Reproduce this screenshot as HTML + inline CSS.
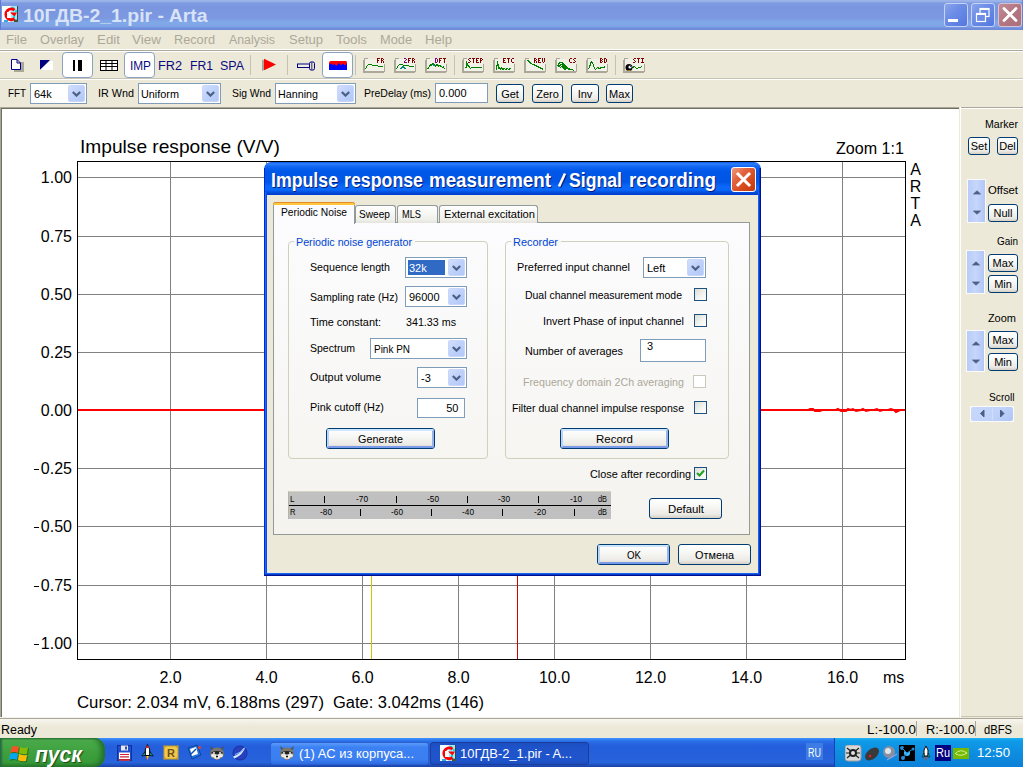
<!DOCTYPE html><html><head><meta charset="utf-8"><style>
html,body{margin:0;padding:0;width:1023px;height:767px;overflow:hidden;background:#ECE9D8;position:relative;}
.a{position:absolute;box-sizing:border-box;}
</style></head><body>
<div class="a" style="left:0px;top:0px;width:1023px;height:30px;background:linear-gradient(#9AAFE8 0px,#9EB9EA 1px,#7E9AE0 3px,#7A96DF 8px,#7B98E0 18px,#80A8E8 22px,#80A6E8 26px,#7490DD 28px,#6F8AD8 29px);"></div>
<div class="a" style="left:0px;top:0px;width:1px;height:30px;background:#5F7BD5;"></div>
<svg class="a" style="left:2px;top:6px" width="16" height="16" viewBox="0 0 16 16"><rect x="0" y="0" width="16" height="16" fill="#F4FCFF"/><rect x="9" y="0" width="7" height="16" fill="#9FE8F4"/><rect x="10" y="1" width="2" height="2" fill="#10E0F0"/><rect x="13" y="4" width="2" height="2" fill="#10E0F0"/><rect x="11" y="10" width="2" height="2" fill="#10E0F0"/><rect x="13" y="13" width="2" height="1" fill="#10E0F0"/><rect x="2" y="14" width="4" height="2" fill="#30A8E0"/><rect x="15" y="0" width="1" height="16" fill="#404040"/><rect x="12" y="14" width="4" height="2" fill="#505030"/><path d="M12.5 4.2 A5.3 5.3 0 1 0 12.5 12.5" stroke="#FF0000" stroke-width="3" fill="none"/><path d="M8 6.5 L15 6.5 L12.5 10.5 Z" fill="#FF0000"/><rect x="5" y="6" width="3" height="6" fill="#FFFFFF"/></svg>
<span class="a" style="left:23.00px;top:7.06px;white-space:pre;font-family:'Liberation Sans',sans-serif;font-size:18px;font-weight:bold;font-style:normal;color:#D9E3F7;line-height:18px;letter-spacing:0px;transform:scaleX(1.0791);transform-origin:0 0;">10ГДВ-2_1.pir - Arta</span>
<div class="a" style="left:944px;top:3px;width:24px;height:24px;border:1px solid #C6D3F6;border-radius:3px;background:linear-gradient(135deg,#89A6EC 0%,#6D8DE6 40%,#5378E0 100%);"></div>
<div class="a" style="left:971px;top:3px;width:24px;height:24px;border:1px solid #C6D3F6;border-radius:3px;background:linear-gradient(135deg,#89A6EC 0%,#6D8DE6 40%,#5378E0 100%);"></div>
<div class="a" style="left:948px;top:19px;width:10px;height:3px;background:#fff;"></div>
<svg class="a" style="left:975px;top:7px" width="16" height="16" viewBox="0 0 16 16"><rect x="5" y="1.5" width="9" height="8" stroke="#fff" stroke-width="1.2" fill="none"/><rect x="5" y="1" width="9" height="2" fill="#fff"/><rect x="1.5" y="6.5" width="9" height="8" stroke="#fff" stroke-width="1.2" fill="#6D8DE6"/><rect x="1" y="6" width="10" height="2" fill="#fff"/></svg>
<div class="a" style="left:998px;top:3px;width:24px;height:24px;border:1px solid #D7C3D4;border-radius:3px;background:linear-gradient(135deg,#C28C98 0%,#B37682 50%,#A8707C 100%);"></div>
<svg class="a" style="left:1002px;top:7px" width="16" height="16" viewBox="0 0 16 16"><path d="M2 1.5 L14 13.5 M14 1.5 L2 13.5" stroke="#fff" stroke-width="2.8" stroke-linecap="round"/></svg>
<div class="a" style="left:1022px;top:0px;width:1px;height:30px;background:#6A80D8;"></div>
<div class="a" style="left:0px;top:30px;width:1023px;height:19px;background:#ECE9D8;"></div>
<span class="a" style="left:6.00px;top:33.84px;white-space:pre;font-family:'Liberation Sans',sans-serif;font-size:12px;font-weight:normal;font-style:normal;color:#ACA899;line-height:12px;letter-spacing:0px;transform:scaleX(1.0856);transform-origin:0 0;">File</span>
<span class="a" style="left:40.00px;top:33.84px;white-space:pre;font-family:'Liberation Sans',sans-serif;font-size:12px;font-weight:normal;font-style:normal;color:#ACA899;line-height:12px;letter-spacing:0px;transform:scaleX(1.0642);transform-origin:0 0;">Overlay</span>
<span class="a" style="left:97.00px;top:33.84px;white-space:pre;font-family:'Liberation Sans',sans-serif;font-size:12px;font-weight:normal;font-style:normal;color:#ACA899;line-height:12px;letter-spacing:0px;transform:scaleX(1.1118);transform-origin:0 0;">Edit</span>
<span class="a" style="left:132.00px;top:33.84px;white-space:pre;font-family:'Liberation Sans',sans-serif;font-size:12px;font-weight:normal;font-style:normal;color:#ACA899;line-height:12px;letter-spacing:0px;transform:scaleX(1.1242);transform-origin:0 0;">View</span>
<span class="a" style="left:174.00px;top:33.84px;white-space:pre;font-family:'Liberation Sans',sans-serif;font-size:12px;font-weight:normal;font-style:normal;color:#ACA899;line-height:12px;letter-spacing:0px;transform:scaleX(1.0598);transform-origin:0 0;">Record</span>
<span class="a" style="left:229.00px;top:33.84px;white-space:pre;font-family:'Liberation Sans',sans-serif;font-size:12px;font-weight:normal;font-style:normal;color:#ACA899;line-height:12px;letter-spacing:0px;transform:scaleX(1.0294);transform-origin:0 0;">Analysis</span>
<span class="a" style="left:289.00px;top:33.84px;white-space:pre;font-family:'Liberation Sans',sans-serif;font-size:12px;font-weight:normal;font-style:normal;color:#ACA899;line-height:12px;letter-spacing:0px;transform:scaleX(1.0842);transform-origin:0 0;">Setup</span>
<span class="a" style="left:336.00px;top:33.84px;white-space:pre;font-family:'Liberation Sans',sans-serif;font-size:12px;font-weight:normal;font-style:normal;color:#ACA899;line-height:12px;letter-spacing:0px;transform:scaleX(1.1065);transform-origin:0 0;">Tools</span>
<span class="a" style="left:380.00px;top:33.84px;white-space:pre;font-family:'Liberation Sans',sans-serif;font-size:12px;font-weight:normal;font-style:normal;color:#ACA899;line-height:12px;letter-spacing:0px;transform:scaleX(1.0656);transform-origin:0 0;">Mode</span>
<span class="a" style="left:425.00px;top:33.84px;white-space:pre;font-family:'Liberation Sans',sans-serif;font-size:12px;font-weight:normal;font-style:normal;color:#ACA899;line-height:12px;letter-spacing:0px;transform:scaleX(1.0937);transform-origin:0 0;">Help</span>
<div class="a" style="left:0px;top:49px;width:1023px;height:1px;background:#fff;"></div>
<div class="a" style="left:0px;top:50px;width:1023px;height:1px;background:#ACA899;"></div>
<div class="a" style="left:0px;top:51px;width:1023px;height:1px;background:#fff;"></div>
<svg class="a" style="left:10px;top:58px" width="16" height="16" viewBox="0 0 16 16"><rect x="4" y="4" width="10" height="10" fill="#ACA899"/><path d="M1.5 1.5 H7 L10.5 5 V11.5 H1.5 Z" fill="#fff" stroke="#000080" stroke-width="1"/><path d="M7 1.5 V5 H10.5" fill="none" stroke="#000080"/></svg>
<svg class="a" style="left:40px;top:60px" width="14" height="10" viewBox="0 0 14 10"><path d="M0 10 L0 0 L10 0 Z" fill="#000080"/><path d="M0 10 L13 10 L13 1 L10 1 Z" fill="#fff"/></svg>
<div class="a" style="left:62px;top:52px;width:31px;height:26px;border:1px solid #8BA2C1;border-radius:4px;background:#FFFFFF;"></div>
<div class="a" style="left:73px;top:60px;width:2px;height:11px;background:#000;"></div>
<div class="a" style="left:78px;top:60px;width:4px;height:11px;background:#000;"></div>
<svg class="a" style="left:100px;top:60px" width="18" height="11" viewBox="0 0 18 11"><rect x="0.5" y="0.5" width="17" height="10" fill="#fff" stroke="#000"/><path d="M0 3.5 H18 M0 6.5 H18 M6 0 V11 M12 0 V11" stroke="#000"/></svg>
<div class="a" style="left:124px;top:52px;width:31px;height:26px;border:1px solid #8BA2C1;border-radius:4px;background:#FFFFFF;"></div>
<span class="a" style="left:130.00px;top:59.84px;white-space:pre;font-family:'Liberation Sans',sans-serif;font-size:12px;font-weight:normal;font-style:normal;color:#0A0A80;line-height:12px;letter-spacing:0px;transform:scaleX(0.9839);transform-origin:0 0;">IMP</span>
<span class="a" style="left:158.00px;top:59.84px;white-space:pre;font-family:'Liberation Sans',sans-serif;font-size:12px;font-weight:normal;font-style:normal;color:#0A0A80;line-height:12px;letter-spacing:0px;transform:scaleX(1.0586);transform-origin:0 0;">FR2</span>
<span class="a" style="left:190.00px;top:59.84px;white-space:pre;font-family:'Liberation Sans',sans-serif;font-size:12px;font-weight:normal;font-style:normal;color:#0A0A80;line-height:12px;letter-spacing:0px;transform:scaleX(1.0145);transform-origin:0 0;">FR1</span>
<span class="a" style="left:220.00px;top:59.84px;white-space:pre;font-family:'Liberation Sans',sans-serif;font-size:12px;font-weight:normal;font-style:normal;color:#0A0A80;line-height:12px;letter-spacing:0px;transform:scaleX(1.0378);transform-origin:0 0;">SPA</span>
<div class="a" style="left:250px;top:55px;width:1px;height:20px;background:#C5C2B2;"></div>
<svg class="a" style="left:261px;top:58px" width="17" height="14" viewBox="0 0 17 14"><path d="M1 1.5 L13 7.5 L1 13 Z" fill="#A8A595"/><path d="M3 0.8 L15 6.5 L3 12.2 Z" fill="#FF0000"/></svg>
<div class="a" style="left:287px;top:55px;width:1px;height:20px;background:#C5C2B2;"></div>
<svg class="a" style="left:296px;top:61px" width="20" height="10" viewBox="0 0 20 10"><rect x="1.5" y="3" width="12" height="3.5" fill="#F0EEE0" stroke="#000080" stroke-width="1"/><rect x="13.5" y="1" width="5" height="8" rx="1.5" fill="#E8E4D0" stroke="#000080" stroke-width="1"/><path d="M15.8 1.5 V8.5" stroke="#000080" stroke-width="0.8"/></svg>
<div class="a" style="left:322px;top:52px;width:31px;height:26px;border:1px solid #8BA2C1;border-radius:4px;background:#FFFFFF;"></div>
<svg class="a" style="left:329px;top:61px" width="19" height="10" viewBox="0 0 19 10"><path d="M0 2 Q0 0 2 0 H17 Q18 0 18 2 V9 H0 Z" fill="#FF0000"/><path d="M0 9 V3.5 L2 2.5 L4 4 L5.5 3 L7.5 5 L10 2 L12 4.5 L14 2.5 L16 4.5 L18 2.5 V9 Z" fill="#0000FF"/></svg>
<div class="a" style="left:355px;top:55px;width:1px;height:20px;background:#C5C2B2;"></div>
<svg class="a" style="left:363px;top:58px" width="23" height="16" viewBox="0 0 23 16" shape-rendering="crispEdges"><rect x="2" y="1" width="19" height="12" fill="#F2F1E8"/><rect x="0" y="2" width="1" height="13" fill="#ACA899"/><rect x="1" y="0" width="1" height="14" fill="#ACA899"/><rect x="1" y="0" width="4" height="1" fill="#ACA899"/><rect x="0" y="14" width="21" height="1" fill="#ACA899"/><rect x="1" y="13" width="21" height="1" fill="#ACA899"/><rect x="21" y="6" width="1" height="8" fill="#ACA899"/><rect x="13" y="-1" width="5" height="7" fill="#ECE9D8" opacity="0.0"/><rect x="14" y="0" width="1" height="1" fill="#800000"/><rect x="15" y="0" width="1" height="1" fill="#800000"/><rect x="16" y="0" width="1" height="1" fill="#800000"/><rect x="14" y="1" width="1" height="1" fill="#800000"/><rect x="14" y="2" width="1" height="1" fill="#800000"/><rect x="15" y="2" width="1" height="1" fill="#800000"/><rect x="14" y="3" width="1" height="1" fill="#800000"/><rect x="14" y="4" width="1" height="1" fill="#800000"/><rect x="17" y="-1" width="5" height="7" fill="#ECE9D8" opacity="0.0"/><rect x="18" y="0" width="1" height="1" fill="#800000"/><rect x="19" y="0" width="1" height="1" fill="#800000"/><rect x="18" y="1" width="1" height="1" fill="#800000"/><rect x="20" y="1" width="1" height="1" fill="#800000"/><rect x="18" y="2" width="1" height="1" fill="#800000"/><rect x="19" y="2" width="1" height="1" fill="#800000"/><rect x="18" y="3" width="1" height="1" fill="#800000"/><rect x="20" y="3" width="1" height="1" fill="#800000"/><rect x="18" y="4" width="1" height="1" fill="#800000"/><rect x="20" y="4" width="1" height="1" fill="#800000"/><polyline points="2.5,11.5 3.5,8.5 5.5,6.5 8.5,6.5 9.5,7.5 14.5,7.5 15.5,8.5 19.5,8.5 20.5,9.5" stroke="#008000" stroke-width="1.2" fill="none" stroke-linejoin="round"/></svg>
<svg class="a" style="left:394px;top:58px" width="23" height="16" viewBox="0 0 23 16" shape-rendering="crispEdges"><rect x="2" y="1" width="19" height="12" fill="#F2F1E8"/><rect x="0" y="2" width="1" height="13" fill="#ACA899"/><rect x="1" y="0" width="1" height="14" fill="#ACA899"/><rect x="1" y="0" width="4" height="1" fill="#ACA899"/><rect x="0" y="14" width="21" height="1" fill="#ACA899"/><rect x="1" y="13" width="21" height="1" fill="#ACA899"/><rect x="21" y="6" width="1" height="8" fill="#ACA899"/><rect x="9" y="-1" width="5" height="7" fill="#ECE9D8" opacity="0.0"/><rect x="10" y="0" width="1" height="1" fill="#800080"/><rect x="11" y="0" width="1" height="1" fill="#800080"/><rect x="12" y="1" width="1" height="1" fill="#800080"/><rect x="11" y="2" width="1" height="1" fill="#800080"/><rect x="10" y="3" width="1" height="1" fill="#800080"/><rect x="10" y="4" width="1" height="1" fill="#800080"/><rect x="11" y="4" width="1" height="1" fill="#800080"/><rect x="12" y="4" width="1" height="1" fill="#800080"/><rect x="13" y="-1" width="5" height="7" fill="#ECE9D8" opacity="0.0"/><rect x="14" y="0" width="1" height="1" fill="#800000"/><rect x="15" y="0" width="1" height="1" fill="#800000"/><rect x="16" y="0" width="1" height="1" fill="#800000"/><rect x="14" y="1" width="1" height="1" fill="#800000"/><rect x="14" y="2" width="1" height="1" fill="#800000"/><rect x="15" y="2" width="1" height="1" fill="#800000"/><rect x="14" y="3" width="1" height="1" fill="#800000"/><rect x="14" y="4" width="1" height="1" fill="#800000"/><rect x="17" y="-1" width="5" height="7" fill="#ECE9D8" opacity="0.0"/><rect x="18" y="0" width="1" height="1" fill="#800000"/><rect x="19" y="0" width="1" height="1" fill="#800000"/><rect x="18" y="1" width="1" height="1" fill="#800000"/><rect x="20" y="1" width="1" height="1" fill="#800000"/><rect x="18" y="2" width="1" height="1" fill="#800000"/><rect x="19" y="2" width="1" height="1" fill="#800000"/><rect x="18" y="3" width="1" height="1" fill="#800000"/><rect x="20" y="3" width="1" height="1" fill="#800000"/><rect x="18" y="4" width="1" height="1" fill="#800000"/><rect x="20" y="4" width="1" height="1" fill="#800000"/><polyline points="2.5,11.5 3.5,8.5 5.5,6.5 8.5,6.5 9.5,7.5 14.5,7.5 15.5,8.5 19.5,8.5 20.5,9.5" stroke="#008000" stroke-width="1.2" fill="none" stroke-linejoin="round"/><polyline points="6.5,11.5 8.5,8.5 9.5,8.5 11.5,11.5" stroke="#008080" stroke-width="1.2" fill="none" stroke-linejoin="round"/></svg>
<svg class="a" style="left:425px;top:58px" width="23" height="16" viewBox="0 0 23 16" shape-rendering="crispEdges"><rect x="2" y="1" width="19" height="12" fill="#F2F1E8"/><rect x="0" y="2" width="1" height="13" fill="#ACA899"/><rect x="1" y="0" width="1" height="14" fill="#ACA899"/><rect x="1" y="0" width="4" height="1" fill="#ACA899"/><rect x="0" y="14" width="21" height="1" fill="#ACA899"/><rect x="1" y="13" width="21" height="1" fill="#ACA899"/><rect x="21" y="6" width="1" height="8" fill="#ACA899"/><rect x="9" y="-1" width="5" height="7" fill="#ECE9D8" opacity="0.0"/><rect x="10" y="0" width="1" height="1" fill="#800080"/><rect x="11" y="0" width="1" height="1" fill="#800080"/><rect x="10" y="1" width="1" height="1" fill="#800080"/><rect x="12" y="1" width="1" height="1" fill="#800080"/><rect x="10" y="2" width="1" height="1" fill="#800080"/><rect x="12" y="2" width="1" height="1" fill="#800080"/><rect x="10" y="3" width="1" height="1" fill="#800080"/><rect x="12" y="3" width="1" height="1" fill="#800080"/><rect x="10" y="4" width="1" height="1" fill="#800080"/><rect x="11" y="4" width="1" height="1" fill="#800080"/><rect x="13" y="-1" width="5" height="7" fill="#ECE9D8" opacity="0.0"/><rect x="14" y="0" width="1" height="1" fill="#800000"/><rect x="15" y="0" width="1" height="1" fill="#800000"/><rect x="16" y="0" width="1" height="1" fill="#800000"/><rect x="14" y="1" width="1" height="1" fill="#800000"/><rect x="14" y="2" width="1" height="1" fill="#800000"/><rect x="15" y="2" width="1" height="1" fill="#800000"/><rect x="14" y="3" width="1" height="1" fill="#800000"/><rect x="14" y="4" width="1" height="1" fill="#800000"/><rect x="17" y="-1" width="5" height="7" fill="#ECE9D8" opacity="0.0"/><rect x="18" y="0" width="1" height="1" fill="#800000"/><rect x="19" y="0" width="1" height="1" fill="#800000"/><rect x="20" y="0" width="1" height="1" fill="#800000"/><rect x="19" y="1" width="1" height="1" fill="#800000"/><rect x="19" y="2" width="1" height="1" fill="#800000"/><rect x="19" y="3" width="1" height="1" fill="#800000"/><rect x="19" y="4" width="1" height="1" fill="#800000"/><polyline points="2.5,11.5 3.5,9.5 4.5,8.5 5.5,6.5 6.5,7.5 7.5,5.5 9.5,6.5 10.5,8.5 11.5,6.5 12.5,6.5 13.5,8.5 14.5,7.5 16.5,8.5 17.5,9.5 18.5,8.5 19.5,11.5" stroke="#008000" stroke-width="1.2" fill="none" stroke-linejoin="round"/><polyline points="8.5,6.5 9.5,8.5" stroke="#008080" stroke-width="1.2" fill="none" stroke-linejoin="round"/></svg>
<svg class="a" style="left:462px;top:58px" width="23" height="16" viewBox="0 0 23 16" shape-rendering="crispEdges"><rect x="2" y="1" width="19" height="12" fill="#F2F1E8"/><rect x="0" y="2" width="1" height="13" fill="#ACA899"/><rect x="1" y="0" width="1" height="14" fill="#ACA899"/><rect x="1" y="0" width="4" height="1" fill="#ACA899"/><rect x="0" y="14" width="21" height="1" fill="#ACA899"/><rect x="1" y="13" width="21" height="1" fill="#ACA899"/><rect x="21" y="6" width="1" height="8" fill="#ACA899"/><rect x="5" y="-1" width="5" height="7" fill="#ECE9D8" opacity="0.0"/><rect x="7" y="0" width="1" height="1" fill="#800000"/><rect x="8" y="0" width="1" height="1" fill="#800000"/><rect x="6" y="1" width="1" height="1" fill="#800000"/><rect x="7" y="2" width="1" height="1" fill="#800000"/><rect x="8" y="3" width="1" height="1" fill="#800000"/><rect x="6" y="4" width="1" height="1" fill="#800000"/><rect x="7" y="4" width="1" height="1" fill="#800000"/><rect x="9" y="-1" width="5" height="7" fill="#ECE9D8" opacity="0.0"/><rect x="10" y="0" width="1" height="1" fill="#800000"/><rect x="11" y="0" width="1" height="1" fill="#800000"/><rect x="12" y="0" width="1" height="1" fill="#800000"/><rect x="11" y="1" width="1" height="1" fill="#800000"/><rect x="11" y="2" width="1" height="1" fill="#800000"/><rect x="11" y="3" width="1" height="1" fill="#800000"/><rect x="11" y="4" width="1" height="1" fill="#800000"/><rect x="13" y="-1" width="5" height="7" fill="#ECE9D8" opacity="0.0"/><rect x="14" y="0" width="1" height="1" fill="#800000"/><rect x="15" y="0" width="1" height="1" fill="#800000"/><rect x="16" y="0" width="1" height="1" fill="#800000"/><rect x="14" y="1" width="1" height="1" fill="#800000"/><rect x="14" y="2" width="1" height="1" fill="#800000"/><rect x="15" y="2" width="1" height="1" fill="#800000"/><rect x="14" y="3" width="1" height="1" fill="#800000"/><rect x="14" y="4" width="1" height="1" fill="#800000"/><rect x="15" y="4" width="1" height="1" fill="#800000"/><rect x="16" y="4" width="1" height="1" fill="#800000"/><rect x="17" y="-1" width="5" height="7" fill="#ECE9D8" opacity="0.0"/><rect x="18" y="0" width="1" height="1" fill="#800000"/><rect x="19" y="0" width="1" height="1" fill="#800000"/><rect x="18" y="1" width="1" height="1" fill="#800000"/><rect x="20" y="1" width="1" height="1" fill="#800000"/><rect x="18" y="2" width="1" height="1" fill="#800000"/><rect x="19" y="2" width="1" height="1" fill="#800000"/><rect x="18" y="3" width="1" height="1" fill="#800000"/><rect x="18" y="4" width="1" height="1" fill="#800000"/><polyline points="2.5,9.5 4.5,9.5 4.5,3.5 5.5,6.5 7.5,9.5 8.5,10.5 9.5,9.5 19.5,9.5" stroke="#008000" stroke-width="1.2" fill="none" stroke-linejoin="round"/></svg>
<svg class="a" style="left:493px;top:58px" width="23" height="16" viewBox="0 0 23 16" shape-rendering="crispEdges"><rect x="2" y="1" width="19" height="12" fill="#F2F1E8"/><rect x="0" y="2" width="1" height="13" fill="#ACA899"/><rect x="1" y="0" width="1" height="14" fill="#ACA899"/><rect x="1" y="0" width="4" height="1" fill="#ACA899"/><rect x="0" y="14" width="21" height="1" fill="#ACA899"/><rect x="1" y="13" width="21" height="1" fill="#ACA899"/><rect x="21" y="6" width="1" height="8" fill="#ACA899"/><rect x="9" y="-1" width="5" height="7" fill="#ECE9D8" opacity="0.0"/><rect x="10" y="0" width="1" height="1" fill="#800000"/><rect x="11" y="0" width="1" height="1" fill="#800000"/><rect x="12" y="0" width="1" height="1" fill="#800000"/><rect x="10" y="1" width="1" height="1" fill="#800000"/><rect x="10" y="2" width="1" height="1" fill="#800000"/><rect x="11" y="2" width="1" height="1" fill="#800000"/><rect x="10" y="3" width="1" height="1" fill="#800000"/><rect x="10" y="4" width="1" height="1" fill="#800000"/><rect x="11" y="4" width="1" height="1" fill="#800000"/><rect x="12" y="4" width="1" height="1" fill="#800000"/><rect x="13" y="-1" width="5" height="7" fill="#ECE9D8" opacity="0.0"/><rect x="14" y="0" width="1" height="1" fill="#800000"/><rect x="15" y="0" width="1" height="1" fill="#800000"/><rect x="16" y="0" width="1" height="1" fill="#800000"/><rect x="15" y="1" width="1" height="1" fill="#800000"/><rect x="15" y="2" width="1" height="1" fill="#800000"/><rect x="15" y="3" width="1" height="1" fill="#800000"/><rect x="15" y="4" width="1" height="1" fill="#800000"/><rect x="17" y="-1" width="5" height="7" fill="#ECE9D8" opacity="0.0"/><rect x="19" y="0" width="1" height="1" fill="#800000"/><rect x="20" y="0" width="1" height="1" fill="#800000"/><rect x="18" y="1" width="1" height="1" fill="#800000"/><rect x="18" y="2" width="1" height="1" fill="#800000"/><rect x="18" y="3" width="1" height="1" fill="#800000"/><rect x="19" y="4" width="1" height="1" fill="#800000"/><rect x="20" y="4" width="1" height="1" fill="#800000"/><polyline points="2.5,11.5 3.5,11.5 4.5,3.5 5.5,10.5 6.5,9.5 7.5,11.5 8.5,9.5 9.5,11.5 11.5,10.5 12.5,11.5 14.5,10.5 15.5,11.5 17.5,10.5 18.5,11.5" stroke="#008000" stroke-width="1.2" fill="none" stroke-linejoin="round"/></svg>
<svg class="a" style="left:524px;top:58px" width="23" height="16" viewBox="0 0 23 16" shape-rendering="crispEdges"><rect x="2" y="1" width="19" height="12" fill="#F2F1E8"/><rect x="0" y="2" width="1" height="13" fill="#ACA899"/><rect x="1" y="0" width="1" height="14" fill="#ACA899"/><rect x="1" y="0" width="4" height="1" fill="#ACA899"/><rect x="0" y="14" width="21" height="1" fill="#ACA899"/><rect x="1" y="13" width="21" height="1" fill="#ACA899"/><rect x="21" y="6" width="1" height="8" fill="#ACA899"/><rect x="9" y="-1" width="5" height="7" fill="#ECE9D8" opacity="0.0"/><rect x="10" y="0" width="1" height="1" fill="#800000"/><rect x="11" y="0" width="1" height="1" fill="#800000"/><rect x="10" y="1" width="1" height="1" fill="#800000"/><rect x="12" y="1" width="1" height="1" fill="#800000"/><rect x="10" y="2" width="1" height="1" fill="#800000"/><rect x="11" y="2" width="1" height="1" fill="#800000"/><rect x="10" y="3" width="1" height="1" fill="#800000"/><rect x="12" y="3" width="1" height="1" fill="#800000"/><rect x="10" y="4" width="1" height="1" fill="#800000"/><rect x="12" y="4" width="1" height="1" fill="#800000"/><rect x="13" y="-1" width="5" height="7" fill="#ECE9D8" opacity="0.0"/><rect x="14" y="0" width="1" height="1" fill="#800000"/><rect x="15" y="0" width="1" height="1" fill="#800000"/><rect x="16" y="0" width="1" height="1" fill="#800000"/><rect x="14" y="1" width="1" height="1" fill="#800000"/><rect x="14" y="2" width="1" height="1" fill="#800000"/><rect x="15" y="2" width="1" height="1" fill="#800000"/><rect x="14" y="3" width="1" height="1" fill="#800000"/><rect x="14" y="4" width="1" height="1" fill="#800000"/><rect x="15" y="4" width="1" height="1" fill="#800000"/><rect x="16" y="4" width="1" height="1" fill="#800000"/><rect x="17" y="-1" width="5" height="7" fill="#ECE9D8" opacity="0.0"/><rect x="18" y="0" width="1" height="1" fill="#800000"/><rect x="20" y="0" width="1" height="1" fill="#800000"/><rect x="18" y="1" width="1" height="1" fill="#800000"/><rect x="20" y="1" width="1" height="1" fill="#800000"/><rect x="18" y="2" width="1" height="1" fill="#800000"/><rect x="20" y="2" width="1" height="1" fill="#800000"/><rect x="18" y="3" width="1" height="1" fill="#800000"/><rect x="20" y="3" width="1" height="1" fill="#800000"/><rect x="19" y="4" width="1" height="1" fill="#800000"/><polyline points="2.5,2.5 4.5,2.5 6.5,5.5 9.5,6.5 13.5,8.5 17.5,10.5 19.5,11.5" stroke="#008000" stroke-width="1.2" fill="none" stroke-linejoin="round"/></svg>
<svg class="a" style="left:555px;top:58px" width="23" height="16" viewBox="0 0 23 16" shape-rendering="crispEdges"><rect x="2" y="1" width="19" height="12" fill="#F2F1E8"/><rect x="0" y="2" width="1" height="13" fill="#ACA899"/><rect x="1" y="0" width="1" height="14" fill="#ACA899"/><rect x="1" y="0" width="4" height="1" fill="#ACA899"/><rect x="0" y="14" width="21" height="1" fill="#ACA899"/><rect x="1" y="13" width="21" height="1" fill="#ACA899"/><rect x="21" y="6" width="1" height="8" fill="#ACA899"/><rect x="13" y="-1" width="5" height="7" fill="#ECE9D8" opacity="0.0"/><rect x="15" y="0" width="1" height="1" fill="#800000"/><rect x="16" y="0" width="1" height="1" fill="#800000"/><rect x="14" y="1" width="1" height="1" fill="#800000"/><rect x="14" y="2" width="1" height="1" fill="#800000"/><rect x="14" y="3" width="1" height="1" fill="#800000"/><rect x="15" y="4" width="1" height="1" fill="#800000"/><rect x="16" y="4" width="1" height="1" fill="#800000"/><rect x="17" y="-1" width="5" height="7" fill="#ECE9D8" opacity="0.0"/><rect x="19" y="0" width="1" height="1" fill="#800000"/><rect x="20" y="0" width="1" height="1" fill="#800000"/><rect x="18" y="1" width="1" height="1" fill="#800000"/><rect x="19" y="2" width="1" height="1" fill="#800000"/><rect x="20" y="3" width="1" height="1" fill="#800000"/><rect x="18" y="4" width="1" height="1" fill="#800000"/><rect x="19" y="4" width="1" height="1" fill="#800000"/><polyline points="2.5,8.5 4.5,4.5 7.5,4.5 9.5,7.5 13.5,10.5 19.5,12.5" stroke="#008000" stroke-width="1.2" fill="none" stroke-linejoin="round"/><polyline points="3.5,9.5 5.5,6.5 7.5,6.5 10.5,10.5 17.5,11.5" stroke="#008000" stroke-width="1.2" fill="none" stroke-linejoin="round"/><polyline points="4.5,10.5 6.5,8.5 8.5,9.5 10.5,12.5" stroke="#008000" stroke-width="1.2" fill="none" stroke-linejoin="round"/></svg>
<svg class="a" style="left:586px;top:58px" width="23" height="16" viewBox="0 0 23 16" shape-rendering="crispEdges"><rect x="2" y="1" width="19" height="12" fill="#F2F1E8"/><rect x="0" y="2" width="1" height="13" fill="#ACA899"/><rect x="1" y="0" width="1" height="14" fill="#ACA899"/><rect x="1" y="0" width="4" height="1" fill="#ACA899"/><rect x="0" y="14" width="21" height="1" fill="#ACA899"/><rect x="1" y="13" width="21" height="1" fill="#ACA899"/><rect x="21" y="6" width="1" height="8" fill="#ACA899"/><rect x="13" y="-1" width="5" height="7" fill="#ECE9D8" opacity="0.0"/><rect x="14" y="0" width="1" height="1" fill="#800000"/><rect x="15" y="0" width="1" height="1" fill="#800000"/><rect x="14" y="1" width="1" height="1" fill="#800000"/><rect x="16" y="1" width="1" height="1" fill="#800000"/><rect x="14" y="2" width="1" height="1" fill="#800000"/><rect x="15" y="2" width="1" height="1" fill="#800000"/><rect x="14" y="3" width="1" height="1" fill="#800000"/><rect x="16" y="3" width="1" height="1" fill="#800000"/><rect x="14" y="4" width="1" height="1" fill="#800000"/><rect x="15" y="4" width="1" height="1" fill="#800000"/><rect x="17" y="-1" width="5" height="7" fill="#ECE9D8" opacity="0.0"/><rect x="18" y="0" width="1" height="1" fill="#800000"/><rect x="19" y="0" width="1" height="1" fill="#800000"/><rect x="18" y="1" width="1" height="1" fill="#800000"/><rect x="20" y="1" width="1" height="1" fill="#800000"/><rect x="18" y="2" width="1" height="1" fill="#800000"/><rect x="20" y="2" width="1" height="1" fill="#800000"/><rect x="18" y="3" width="1" height="1" fill="#800000"/><rect x="20" y="3" width="1" height="1" fill="#800000"/><rect x="18" y="4" width="1" height="1" fill="#800000"/><rect x="19" y="4" width="1" height="1" fill="#800000"/><polyline points="2.5,11.5 3.5,8.5 5.5,3.5 6.5,4.5 8.5,10.5 9.5,11.5 11.5,9.5 13.5,10.5 15.5,9.5 17.5,9.5 19.5,8.5" stroke="#008000" stroke-width="1.2" fill="none" stroke-linejoin="round"/></svg>
<svg class="a" style="left:623px;top:58px" width="23" height="16" viewBox="0 0 23 16" shape-rendering="crispEdges"><rect x="2" y="1" width="19" height="12" fill="#F2F1E8"/><rect x="0" y="2" width="1" height="13" fill="#ACA899"/><rect x="1" y="0" width="1" height="14" fill="#ACA899"/><rect x="1" y="0" width="4" height="1" fill="#ACA899"/><rect x="0" y="14" width="21" height="1" fill="#ACA899"/><rect x="1" y="13" width="21" height="1" fill="#ACA899"/><rect x="21" y="6" width="1" height="8" fill="#ACA899"/><rect x="9" y="-1" width="5" height="7" fill="#ECE9D8" opacity="0.0"/><rect x="11" y="0" width="1" height="1" fill="#800000"/><rect x="12" y="0" width="1" height="1" fill="#800000"/><rect x="10" y="1" width="1" height="1" fill="#800000"/><rect x="11" y="2" width="1" height="1" fill="#800000"/><rect x="12" y="3" width="1" height="1" fill="#800000"/><rect x="10" y="4" width="1" height="1" fill="#800000"/><rect x="11" y="4" width="1" height="1" fill="#800000"/><rect x="13" y="-1" width="5" height="7" fill="#ECE9D8" opacity="0.0"/><rect x="14" y="0" width="1" height="1" fill="#800000"/><rect x="15" y="0" width="1" height="1" fill="#800000"/><rect x="16" y="0" width="1" height="1" fill="#800000"/><rect x="15" y="1" width="1" height="1" fill="#800000"/><rect x="15" y="2" width="1" height="1" fill="#800000"/><rect x="15" y="3" width="1" height="1" fill="#800000"/><rect x="15" y="4" width="1" height="1" fill="#800000"/><rect x="17" y="-1" width="5" height="7" fill="#ECE9D8" opacity="0.0"/><rect x="18" y="0" width="1" height="1" fill="#800000"/><rect x="19" y="0" width="1" height="1" fill="#800000"/><rect x="20" y="0" width="1" height="1" fill="#800000"/><rect x="19" y="1" width="1" height="1" fill="#800000"/><rect x="19" y="2" width="1" height="1" fill="#800000"/><rect x="19" y="3" width="1" height="1" fill="#800000"/><rect x="18" y="4" width="1" height="1" fill="#800000"/><rect x="19" y="4" width="1" height="1" fill="#800000"/><rect x="20" y="4" width="1" height="1" fill="#800000"/><polyline points="9.5,9.5 11.5,8.5 13.5,10.5 16.5,9.5 19.5,8.5" stroke="#008000" stroke-width="1.2" fill="none" stroke-linejoin="round"/><circle cx="6" cy="9.5" r="3.5" fill="#000" shape-rendering="auto"/><circle cx="7" cy="9" r="1.6" fill="#fff" shape-rendering="auto"/><rect x="7" y="8" width="1" height="1" fill="#2040FF"/><path d="M4 12 L8 12 L6 13Z" fill="#E0A000" shape-rendering="auto"/></svg>
<div class="a" style="left:454px;top:55px;width:1px;height:20px;background:#C5C2B2;"></div>
<div class="a" style="left:615px;top:55px;width:1px;height:20px;background:#C5C2B2;"></div>
<div class="a" style="left:0px;top:78px;width:1023px;height:1px;background:#C8C5B5;"></div>
<div class="a" style="left:0px;top:79px;width:1023px;height:1px;background:#FFFFFF;"></div>
<span class="a" style="left:8.00px;top:87.69px;white-space:pre;font-family:'Liberation Sans',sans-serif;font-size:11px;font-weight:normal;font-style:normal;color:#000;line-height:11px;letter-spacing:0px;transform:scaleX(0.8923);transform-origin:0 0;">FFT</span>
<div class="a" style="left:30px;top:83px;width:57px;height:21px;border:1px solid #7F9DB9;background:#fff;"></div>
<div class="a" style="left:68px;top:85px;width:17px;height:17px;border-radius:2px;background:linear-gradient(135deg,#D2DEFD 0%,#C0D2FB 45%,#B2C8F8 100%);border:1px solid #C8D6FA;"></div>
<svg class="a" style="left:72.0px;top:90.5px" width="9" height="6" viewBox="0 0 9 6"><path d="M0.8 1 L4.5 4.6 L8.2 1" stroke="#4D6185" stroke-width="2.2" fill="none"/></svg>
<span class="a" style="left:34.00px;top:88.69px;white-space:pre;font-family:'Liberation Sans',sans-serif;font-size:11px;font-weight:normal;font-style:normal;color:#000;line-height:11px;letter-spacing:0px;">64k</span>
<span class="a" style="left:98.00px;top:87.69px;white-space:pre;font-family:'Liberation Sans',sans-serif;font-size:11px;font-weight:normal;font-style:normal;color:#000;line-height:11px;letter-spacing:0px;transform:scaleX(0.9813);transform-origin:0 0;">IR Wnd</span>
<div class="a" style="left:138px;top:83px;width:83px;height:21px;border:1px solid #7F9DB9;background:#fff;"></div>
<div class="a" style="left:202px;top:85px;width:17px;height:17px;border-radius:2px;background:linear-gradient(135deg,#D2DEFD 0%,#C0D2FB 45%,#B2C8F8 100%);border:1px solid #C8D6FA;"></div>
<svg class="a" style="left:206.0px;top:90.5px" width="9" height="6" viewBox="0 0 9 6"><path d="M0.8 1 L4.5 4.6 L8.2 1" stroke="#4D6185" stroke-width="2.2" fill="none"/></svg>
<span class="a" style="left:140.50px;top:88.69px;white-space:pre;font-family:'Liberation Sans',sans-serif;font-size:11px;font-weight:normal;font-style:normal;color:#000;line-height:11px;letter-spacing:0px;transform:scaleX(0.9866);transform-origin:0 0;">Uniform</span>
<span class="a" style="left:232.00px;top:87.69px;white-space:pre;font-family:'Liberation Sans',sans-serif;font-size:11px;font-weight:normal;font-style:normal;color:#000;line-height:11px;letter-spacing:0px;transform:scaleX(0.9380);transform-origin:0 0;">Sig Wnd</span>
<div class="a" style="left:275px;top:83px;width:81px;height:21px;border:1px solid #7F9DB9;background:#fff;"></div>
<div class="a" style="left:337px;top:85px;width:17px;height:17px;border-radius:2px;background:linear-gradient(135deg,#D2DEFD 0%,#C0D2FB 45%,#B2C8F8 100%);border:1px solid #C8D6FA;"></div>
<svg class="a" style="left:341.0px;top:90.5px" width="9" height="6" viewBox="0 0 9 6"><path d="M0.8 1 L4.5 4.6 L8.2 1" stroke="#4D6185" stroke-width="2.2" fill="none"/></svg>
<span class="a" style="left:277.50px;top:88.69px;white-space:pre;font-family:'Liberation Sans',sans-serif;font-size:11px;font-weight:normal;font-style:normal;color:#000;line-height:11px;letter-spacing:0px;transform:scaleX(0.9760);transform-origin:0 0;">Hanning</span>
<span class="a" style="left:364.00px;top:87.69px;white-space:pre;font-family:'Liberation Sans',sans-serif;font-size:11px;font-weight:normal;font-style:normal;color:#000;line-height:11px;letter-spacing:0px;transform:scaleX(0.9531);transform-origin:0 0;">PreDelay (ms)</span>
<div class="a" style="left:435px;top:83px;width:53px;height:20px;border:1px solid #7F9DB9;background:#fff;"></div>
<span class="a" style="left:439.00px;top:87.69px;white-space:pre;font-family:'Liberation Sans',sans-serif;font-size:11px;font-weight:normal;font-style:normal;color:#000;line-height:11px;letter-spacing:0px;">0.000</span>
<div class="a" style="left:496px;top:84px;width:28px;height:19px;border:1px solid #003C74;border-radius:3px;background:linear-gradient(#FFFFFF 0%,#F7F7F4 40%,#ECEBE6 80%,#D6D0C5 100%);"></div>
<span class="a" style="left:501.13px;top:88.69px;white-space:pre;font-family:'Liberation Sans',sans-serif;font-size:11px;font-weight:normal;font-style:normal;color:#000;line-height:11px;letter-spacing:0px;">Get</span>
<div class="a" style="left:532px;top:84px;width:31px;height:19px;border:1px solid #003C74;border-radius:3px;background:linear-gradient(#FFFFFF 0%,#F7F7F4 40%,#ECEBE6 80%,#D6D0C5 100%);"></div>
<span class="a" style="left:536.19px;top:88.69px;white-space:pre;font-family:'Liberation Sans',sans-serif;font-size:11px;font-weight:normal;font-style:normal;color:#000;line-height:11px;letter-spacing:0px;">Zero</span>
<div class="a" style="left:571px;top:84px;width:28px;height:19px;border:1px solid #003C74;border-radius:3px;background:linear-gradient(#FFFFFF 0%,#F7F7F4 40%,#ECEBE6 80%,#D6D0C5 100%);"></div>
<span class="a" style="left:577.66px;top:88.69px;white-space:pre;font-family:'Liberation Sans',sans-serif;font-size:11px;font-weight:normal;font-style:normal;color:#000;line-height:11px;letter-spacing:0px;">Inv</span>
<div class="a" style="left:606px;top:84px;width:27px;height:19px;border:1px solid #003C74;border-radius:3px;background:linear-gradient(#FFFFFF 0%,#F7F7F4 40%,#ECEBE6 80%,#D6D0C5 100%);"></div>
<span class="a" style="left:609.11px;top:88.69px;white-space:pre;font-family:'Liberation Sans',sans-serif;font-size:11px;font-weight:normal;font-style:normal;color:#000;line-height:11px;letter-spacing:0px;">Max</span>
<div class="a" style="left:0px;top:107px;width:959px;height:611px;background:#fff;border-top:1px solid #ACA899;border-left:1px solid #ACA899;"></div>
<div class="a" style="left:1px;top:108px;width:958px;height:610px;border-top:1px solid #716F64;border-left:1px solid #716F64;"></div>
<div class="a" style="left:960px;top:107px;width:63px;height:611px;background:#ECE9D8;border-left:1px solid #fff;"></div>
<div class="a" style="left:961px;top:107px;width:62px;height:1px;background:#ACA899;"></div>
<div class="a" style="left:961px;top:108px;width:62px;height:1px;background:#fff;"></div>
<div class="a" style="left:961px;top:716px;width:62px;height:1px;background:#C8C5B5;"></div>
<div class="a" style="left:170px;top:161px;width:1px;height:499px;background:#808080;"></div>
<div class="a" style="left:266px;top:161px;width:1px;height:499px;background:#808080;"></div>
<div class="a" style="left:362px;top:161px;width:1px;height:499px;background:#808080;"></div>
<div class="a" style="left:458px;top:161px;width:1px;height:499px;background:#808080;"></div>
<div class="a" style="left:554px;top:161px;width:1px;height:499px;background:#808080;"></div>
<div class="a" style="left:650px;top:161px;width:1px;height:499px;background:#808080;"></div>
<div class="a" style="left:746px;top:161px;width:1px;height:499px;background:#808080;"></div>
<div class="a" style="left:842px;top:161px;width:1px;height:499px;background:#808080;"></div>
<div class="a" style="left:77px;top:177px;width:829px;height:1px;background:#808080;"></div>
<div class="a" style="left:77px;top:236px;width:829px;height:1px;background:#808080;"></div>
<div class="a" style="left:77px;top:294px;width:829px;height:1px;background:#808080;"></div>
<div class="a" style="left:77px;top:352px;width:829px;height:1px;background:#808080;"></div>
<div class="a" style="left:77px;top:410px;width:829px;height:1px;background:#808080;"></div>
<div class="a" style="left:77px;top:468px;width:829px;height:1px;background:#808080;"></div>
<div class="a" style="left:77px;top:526px;width:829px;height:1px;background:#808080;"></div>
<div class="a" style="left:77px;top:585px;width:829px;height:1px;background:#808080;"></div>
<div class="a" style="left:77px;top:643px;width:829px;height:1px;background:#808080;"></div>
<div class="a" style="left:77px;top:161px;width:829px;height:499px;border:1px solid #000;"></div>
<div class="a" style="left:78px;top:409px;width:827px;height:2px;background:#FF0000;"></div>
<svg class="a" style="left:808px;top:404px" width="98" height="12"><path d="M0 6 L2 5 L5 5 L7 7 L12 7 L14 6 L28 6 L30 5 L33 7 L38 7 L40 5 L42 6 L45 5 L48 7 L53 6 L55 5 L58 7 L62 6 L66 6 L69 5 L72 7 L75 6 L80 6 L83 5 L86 6 L88 8 L90 7 L92 6 L96 6" stroke="#FF0000" stroke-width="2" fill="none"/></svg>
<div class="a" style="left:371px;top:576px;width:1px;height:83px;background:#C8C800;"></div>
<div class="a" style="left:517px;top:576px;width:1px;height:83px;background:#CC0000;"></div>
<span class="a" style="left:80.00px;top:137.42px;white-space:pre;font-family:'Liberation Sans',sans-serif;font-size:19px;font-weight:normal;font-style:normal;color:#000;line-height:19px;letter-spacing:0px;transform:scaleX(1.0074);transform-origin:0 0;">Impulse response (V/V)</span>
<span class="a" style="left:836.00px;top:140.96px;white-space:pre;font-family:'Liberation Sans',sans-serif;font-size:16px;font-weight:normal;font-style:normal;color:#000;line-height:16px;letter-spacing:0px;transform:scaleX(1.0060);transform-origin:0 0;">Zoom 1:1</span>
<span class="a" style="left:910.16px;top:162.46px;white-space:pre;font-family:'Liberation Sans',sans-serif;font-size:16px;font-weight:normal;font-style:normal;color:#000;line-height:16px;letter-spacing:0px;">A</span>
<span class="a" style="left:909.72px;top:179.46px;white-space:pre;font-family:'Liberation Sans',sans-serif;font-size:16px;font-weight:normal;font-style:normal;color:#000;line-height:16px;letter-spacing:0px;">R</span>
<span class="a" style="left:910.61px;top:196.46px;white-space:pre;font-family:'Liberation Sans',sans-serif;font-size:16px;font-weight:normal;font-style:normal;color:#000;line-height:16px;letter-spacing:0px;">T</span>
<span class="a" style="left:910.16px;top:213.46px;white-space:pre;font-family:'Liberation Sans',sans-serif;font-size:16px;font-weight:normal;font-style:normal;color:#000;line-height:16px;letter-spacing:0px;">A</span>
<span class="a" style="left:40.86px;top:169.96px;white-space:pre;font-family:'Liberation Sans',sans-serif;font-size:16px;font-weight:normal;font-style:normal;color:#000;line-height:16px;letter-spacing:0px;">1.00</span>
<span class="a" style="left:40.86px;top:228.96px;white-space:pre;font-family:'Liberation Sans',sans-serif;font-size:16px;font-weight:normal;font-style:normal;color:#000;line-height:16px;letter-spacing:0px;">0.75</span>
<span class="a" style="left:40.86px;top:286.96px;white-space:pre;font-family:'Liberation Sans',sans-serif;font-size:16px;font-weight:normal;font-style:normal;color:#000;line-height:16px;letter-spacing:0px;">0.50</span>
<span class="a" style="left:40.86px;top:344.96px;white-space:pre;font-family:'Liberation Sans',sans-serif;font-size:16px;font-weight:normal;font-style:normal;color:#000;line-height:16px;letter-spacing:0px;">0.25</span>
<span class="a" style="left:40.86px;top:402.96px;white-space:pre;font-family:'Liberation Sans',sans-serif;font-size:16px;font-weight:normal;font-style:normal;color:#000;line-height:16px;letter-spacing:0px;">0.00</span>
<span class="a" style="left:40.86px;top:460.96px;white-space:pre;font-family:'Liberation Sans',sans-serif;font-size:16px;font-weight:normal;font-style:normal;color:#000;line-height:16px;letter-spacing:0px;">0.25</span>
<div class="a" style="left:34px;top:469px;width:5px;height:1px;background:#000;"></div>
<span class="a" style="left:40.86px;top:518.96px;white-space:pre;font-family:'Liberation Sans',sans-serif;font-size:16px;font-weight:normal;font-style:normal;color:#000;line-height:16px;letter-spacing:0px;">0.50</span>
<div class="a" style="left:34px;top:527px;width:5px;height:1px;background:#000;"></div>
<span class="a" style="left:40.86px;top:577.96px;white-space:pre;font-family:'Liberation Sans',sans-serif;font-size:16px;font-weight:normal;font-style:normal;color:#000;line-height:16px;letter-spacing:0px;">0.75</span>
<div class="a" style="left:34px;top:586px;width:5px;height:1px;background:#000;"></div>
<span class="a" style="left:40.86px;top:635.96px;white-space:pre;font-family:'Liberation Sans',sans-serif;font-size:16px;font-weight:normal;font-style:normal;color:#000;line-height:16px;letter-spacing:0px;">1.00</span>
<div class="a" style="left:34px;top:644px;width:5px;height:1px;background:#000;"></div>
<span class="a" style="left:159.38px;top:669.96px;white-space:pre;font-family:'Liberation Sans',sans-serif;font-size:16px;font-weight:normal;font-style:normal;color:#000;line-height:16px;letter-spacing:0px;">2.0</span>
<span class="a" style="left:255.38px;top:669.96px;white-space:pre;font-family:'Liberation Sans',sans-serif;font-size:16px;font-weight:normal;font-style:normal;color:#000;line-height:16px;letter-spacing:0px;">4.0</span>
<span class="a" style="left:351.38px;top:669.96px;white-space:pre;font-family:'Liberation Sans',sans-serif;font-size:16px;font-weight:normal;font-style:normal;color:#000;line-height:16px;letter-spacing:0px;">6.0</span>
<span class="a" style="left:447.38px;top:669.96px;white-space:pre;font-family:'Liberation Sans',sans-serif;font-size:16px;font-weight:normal;font-style:normal;color:#000;line-height:16px;letter-spacing:0px;">8.0</span>
<span class="a" style="left:538.93px;top:669.96px;white-space:pre;font-family:'Liberation Sans',sans-serif;font-size:16px;font-weight:normal;font-style:normal;color:#000;line-height:16px;letter-spacing:0px;">10.0</span>
<span class="a" style="left:634.93px;top:669.96px;white-space:pre;font-family:'Liberation Sans',sans-serif;font-size:16px;font-weight:normal;font-style:normal;color:#000;line-height:16px;letter-spacing:0px;">12.0</span>
<span class="a" style="left:730.93px;top:669.96px;white-space:pre;font-family:'Liberation Sans',sans-serif;font-size:16px;font-weight:normal;font-style:normal;color:#000;line-height:16px;letter-spacing:0px;">14.0</span>
<span class="a" style="left:826.93px;top:669.96px;white-space:pre;font-family:'Liberation Sans',sans-serif;font-size:16px;font-weight:normal;font-style:normal;color:#000;line-height:16px;letter-spacing:0px;">16.0</span>
<span class="a" style="left:883.00px;top:669.96px;white-space:pre;font-family:'Liberation Sans',sans-serif;font-size:16px;font-weight:normal;font-style:normal;color:#000;line-height:16px;letter-spacing:0px;">ms</span>
<span class="a" style="left:77.00px;top:694.96px;white-space:pre;font-family:'Liberation Sans',sans-serif;font-size:16px;font-weight:normal;font-style:normal;color:#000;line-height:16px;letter-spacing:0px;transform:scaleX(1.0467);transform-origin:0 0;">Cursor: 2.034 mV, 6.188ms (297)</span>
<span class="a" style="left:332.50px;top:694.96px;white-space:pre;font-family:'Liberation Sans',sans-serif;font-size:16px;font-weight:normal;font-style:normal;color:#000;line-height:16px;letter-spacing:0px;transform:scaleX(1.0290);transform-origin:0 0;">Gate: 3.042ms (146)</span>
<span class="a" style="left:985.00px;top:118.69px;white-space:pre;font-family:'Liberation Sans',sans-serif;font-size:11px;font-weight:normal;font-style:normal;color:#000;line-height:11px;letter-spacing:0px;transform:scaleX(0.9639);transform-origin:0 0;">Marker</span>
<div class="a" style="left:968px;top:137px;width:22px;height:18px;border:1px solid #003C74;border-radius:3px;background:linear-gradient(#FFFFFF 0%,#F7F7F4 40%,#ECEBE6 80%,#D6D0C5 100%);"></div>
<span class="a" style="left:970.74px;top:141.19px;white-space:pre;font-family:'Liberation Sans',sans-serif;font-size:11px;font-weight:normal;font-style:normal;color:#000;line-height:11px;letter-spacing:0px;">Set</span>
<div class="a" style="left:997px;top:137px;width:21px;height:18px;border:1px solid #003C74;border-radius:3px;background:linear-gradient(#FFFFFF 0%,#F7F7F4 40%,#ECEBE6 80%,#D6D0C5 100%);"></div>
<span class="a" style="left:999.24px;top:141.19px;white-space:pre;font-family:'Liberation Sans',sans-serif;font-size:11px;font-weight:normal;font-style:normal;color:#000;line-height:11px;letter-spacing:0px;">Del</span>
<div class="a" style="left:967px;top:179px;width:19px;height:44px;border:1px solid #FAFAF8;background:linear-gradient(90deg,#B8CCF8,#C6D6FC 50%,#B2C6F6);"></div>
<svg class="a" style="left:972.5px;top:190px" width="8" height="5" viewBox="0 0 8 5"><path d="M0.5 4 L4 0.8 L7.5 4 Z" fill="#4D6185" stroke="#4D6185" stroke-width="0.8" stroke-linejoin="round"/></svg>
<svg class="a" style="left:972.5px;top:210px" width="8" height="5" viewBox="0 0 8 5"><path d="M0.5 1 L4 4.2 L7.5 1 Z" fill="#4D6185" stroke="#4D6185" stroke-width="0.8" stroke-linejoin="round"/></svg>
<span class="a" style="left:988.00px;top:184.69px;white-space:pre;font-family:'Liberation Sans',sans-serif;font-size:11px;font-weight:normal;font-style:normal;color:#000;line-height:11px;letter-spacing:0px;transform:scaleX(1.0289);transform-origin:0 0;">Offset</span>
<div class="a" style="left:988px;top:204px;width:30px;height:18px;border:1px solid #003C74;border-radius:3px;background:linear-gradient(#FFFFFF 0%,#F7F7F4 40%,#ECEBE6 80%,#D6D0C5 100%);"></div>
<span class="a" style="left:993.52px;top:208.19px;white-space:pre;font-family:'Liberation Sans',sans-serif;font-size:11px;font-weight:normal;font-style:normal;color:#000;line-height:11px;letter-spacing:0px;">Null</span>
<span class="a" style="left:996.50px;top:236.19px;white-space:pre;font-family:'Liberation Sans',sans-serif;font-size:11px;font-weight:normal;font-style:normal;color:#000;line-height:11px;letter-spacing:0px;transform:scaleX(0.9032);transform-origin:0 0;">Gain</span>
<div class="a" style="left:966px;top:250px;width:19px;height:44px;border:1px solid #FAFAF8;background:linear-gradient(90deg,#B8CCF8,#C6D6FC 50%,#B2C6F6);"></div>
<svg class="a" style="left:971.5px;top:261px" width="8" height="5" viewBox="0 0 8 5"><path d="M0.5 4 L4 0.8 L7.5 4 Z" fill="#4D6185" stroke="#4D6185" stroke-width="0.8" stroke-linejoin="round"/></svg>
<svg class="a" style="left:971.5px;top:281px" width="8" height="5" viewBox="0 0 8 5"><path d="M0.5 1 L4 4.2 L7.5 1 Z" fill="#4D6185" stroke="#4D6185" stroke-width="0.8" stroke-linejoin="round"/></svg>
<div class="a" style="left:988px;top:254px;width:30px;height:18px;border:1px solid #003C74;border-radius:3px;background:linear-gradient(#FFFFFF 0%,#F7F7F4 40%,#ECEBE6 80%,#D6D0C5 100%);"></div>
<span class="a" style="left:992.61px;top:258.19px;white-space:pre;font-family:'Liberation Sans',sans-serif;font-size:11px;font-weight:normal;font-style:normal;color:#000;line-height:11px;letter-spacing:0px;">Max</span>
<div class="a" style="left:988px;top:275px;width:30px;height:18px;border:1px solid #003C74;border-radius:3px;background:linear-gradient(#FFFFFF 0%,#F7F7F4 40%,#ECEBE6 80%,#D6D0C5 100%);"></div>
<span class="a" style="left:994.13px;top:279.19px;white-space:pre;font-family:'Liberation Sans',sans-serif;font-size:11px;font-weight:normal;font-style:normal;color:#000;line-height:11px;letter-spacing:0px;">Min</span>
<span class="a" style="left:987.88px;top:313.19px;white-space:pre;font-family:'Liberation Sans',sans-serif;font-size:11px;font-weight:normal;font-style:normal;color:#000;line-height:11px;letter-spacing:0px;">Zoom</span>
<div class="a" style="left:966px;top:330px;width:19px;height:42px;border:1px solid #FAFAF8;background:linear-gradient(90deg,#B8CCF8,#C6D6FC 50%,#B2C6F6);"></div>
<svg class="a" style="left:971.5px;top:341px" width="8" height="5" viewBox="0 0 8 5"><path d="M0.5 4 L4 0.8 L7.5 4 Z" fill="#4D6185" stroke="#4D6185" stroke-width="0.8" stroke-linejoin="round"/></svg>
<svg class="a" style="left:971.5px;top:359px" width="8" height="5" viewBox="0 0 8 5"><path d="M0.5 1 L4 4.2 L7.5 1 Z" fill="#4D6185" stroke="#4D6185" stroke-width="0.8" stroke-linejoin="round"/></svg>
<div class="a" style="left:988px;top:331px;width:30px;height:18px;border:1px solid #003C74;border-radius:3px;background:linear-gradient(#FFFFFF 0%,#F7F7F4 40%,#ECEBE6 80%,#D6D0C5 100%);"></div>
<span class="a" style="left:992.61px;top:335.19px;white-space:pre;font-family:'Liberation Sans',sans-serif;font-size:11px;font-weight:normal;font-style:normal;color:#000;line-height:11px;letter-spacing:0px;">Max</span>
<div class="a" style="left:988px;top:353px;width:30px;height:18px;border:1px solid #003C74;border-radius:3px;background:linear-gradient(#FFFFFF 0%,#F7F7F4 40%,#ECEBE6 80%,#D6D0C5 100%);"></div>
<span class="a" style="left:994.13px;top:357.19px;white-space:pre;font-family:'Liberation Sans',sans-serif;font-size:11px;font-weight:normal;font-style:normal;color:#000;line-height:11px;letter-spacing:0px;">Min</span>
<span class="a" style="left:988.50px;top:391.69px;white-space:pre;font-family:'Liberation Sans',sans-serif;font-size:11px;font-weight:normal;font-style:normal;color:#000;line-height:11px;letter-spacing:0px;transform:scaleX(0.9267);transform-origin:0 0;">Scroll</span>
<div class="a" style="left:970px;top:406px;width:44px;height:16px;background:#FAFAF8;"></div>
<div class="a" style="left:971px;top:407px;width:42px;height:14px;border-radius:2px;background:linear-gradient(135deg,#C8D8FC,#C2D3FB 50%,#B0C6F6);"></div>
<div class="a" style="left:992px;top:408px;width:1px;height:12px;background:#D0DEFC;"></div>
<svg class="a" style="left:979px;top:409px" width="27" height="9" viewBox="0 0 27 9"><path d="M5 1 L1.5 4.5 L5 8 Z M21.5 1 L25 4.5 L21.5 8 Z" fill="#4D6185" stroke="#4D6185" stroke-width="1" stroke-linejoin="round"/></svg>
<div class="a" style="left:0px;top:717px;width:959px;height:1px;background:#F4F2E8;"></div>
<div class="a" style="left:0px;top:718px;width:1023px;height:1px;background:#ACA899;"></div>
<div class="a" style="left:0px;top:719px;width:1023px;height:19px;background:linear-gradient(#F6F5EF,#ECE9D8 40%,#ECE9D8);"></div>
<span class="a" style="left:1.00px;top:723.84px;white-space:pre;font-family:'Liberation Sans',sans-serif;font-size:12px;font-weight:normal;font-style:normal;color:#000;line-height:12px;letter-spacing:0px;transform:scaleX(1.0378);transform-origin:0 0;">Ready</span>
<div class="a" style="left:916px;top:721px;width:1px;height:15px;background:#ACA899;"></div>
<div class="a" style="left:975px;top:721px;width:1px;height:15px;background:#ACA899;"></div>
<span class="a" style="left:867.00px;top:723.84px;white-space:pre;font-family:'Liberation Sans',sans-serif;font-size:12px;font-weight:normal;font-style:normal;color:#000;line-height:12px;letter-spacing:0px;transform:scaleX(1.1125);transform-origin:0 0;">L:-100.0</span>
<span class="a" style="left:926.00px;top:723.84px;white-space:pre;font-family:'Liberation Sans',sans-serif;font-size:12px;font-weight:normal;font-style:normal;color:#000;line-height:12px;letter-spacing:0px;transform:scaleX(1.0645);transform-origin:0 0;">R:-100.0</span>
<span class="a" style="left:984.00px;top:723.84px;white-space:pre;font-family:'Liberation Sans',sans-serif;font-size:12px;font-weight:normal;font-style:normal;color:#000;line-height:12px;letter-spacing:0px;transform:scaleX(0.9328);transform-origin:0 0;">dBFS</span>
<div class="a" style="left:0px;top:738px;width:1023px;height:29px;background:linear-gradient(#3D95FF 0px,#2A70E8 3px,#245EDC 8px,#2763DB 85%,#1941A5 100%);"></div>
<div class="a" style="left:0px;top:738px;width:105px;height:29px;border-radius:0 11px 11px 0;background:linear-gradient(#2E7A2E 0px,#55B455 2px,#47A847 5px,#3DA03D 50%,#389A38 85%,#2A7E2A 100%);box-shadow:inset -4px 0 5px #22702A, inset 2px 0 2px #2A6A4A;"></div>
<svg class="a" style="left:9px;top:745px" width="22" height="19" viewBox="0 0 22 19"><g transform="translate(1,1)" opacity="0.45"><path d="M3 2 Q6 0 10 2 L9 8 Q5 6 1 8 Z M11 2 Q15 4 19 2 L18 9 Q14 10 10 8 Z M1 9 Q5 7 9 9 L8 15 Q4 13 0 15 Z M10 9 Q14 11 18 10 L17 16 Q13 17 9 15 Z" fill="#0A3A0A"/></g><path d="M3 2 Q6 0 10 2 L9 8 Q5 6 1 8 Z" fill="#F35325"/><path d="M11 2 Q15 4 19 2 L18 9 Q14 10 10 8 Z" fill="#81BC06"/><path d="M1 9 Q5 7 9 9 L8 15 Q4 13 0 15 Z" fill="#05A6F0"/><path d="M10 9 Q14 11 18 10 L17 16 Q13 17 9 15 Z" fill="#FFBA08"/></svg>
<span class="a" style="left:34.50px;top:744.38px;white-space:pre;font-family:'Liberation Sans',sans-serif;font-size:22px;font-weight:bold;font-style:italic;color:#fff;line-height:22px;letter-spacing:0px;transform:scaleX(0.9580);transform-origin:0 0;text-shadow:1px 1px 1px #1A4A1A;">пуск</span>
<div class="a" style="left:834px;top:738px;width:189px;height:29px;background:linear-gradient(#1AB3F5 0px,#0F9AE8 3px,#0D8EE0 50%,#0C80D8 100%);border-left:1px solid #1042AF;"></div>
<svg class="a" style="left:117px;top:745px" width="15" height="16" viewBox="0 0 15 16"><rect x="0.5" y="0.5" width="14" height="15" fill="#1F4FCF" stroke="#0A2A90" stroke-width="0.8"/><rect x="4" y="0.5" width="7" height="5" fill="#E8E8E8"/><rect x="8" y="1.5" width="2" height="3" fill="#1F4FCF"/><rect x="2" y="7.5" width="11" height="8" fill="#fff"/><path d="M3 9.5 H12 M3 11.8 H12" stroke="#D02030" stroke-width="1.2"/><rect x="2" y="14" width="11" height="1.8" fill="#C02030"/></svg>
<svg class="a" style="left:141px;top:744px" width="13" height="17" viewBox="0 0 13 17"><path d="M6.5 0.5 Q9.5 4 8.8 11.5 H4.2 Q3.5 4 6.5 0.5Z" fill="#fff" stroke="#000" stroke-width="1"/><path d="M5 2.5 Q6.5 1 8 2.5 L7.5 4 H5.5Z" fill="#E02020"/><path d="M4.2 7.5 L0.8 12 L4.2 11.5Z M8.8 7.5 L12.2 12 L8.8 11.5Z" fill="#10C0C0" stroke="#000" stroke-width="0.8"/><path d="M5 12 L6.5 16.5 L8 12Z" fill="#FF8000"/><path d="M5.8 12 L6.5 14.5 L7.2 12Z" fill="#FFE000"/></svg>
<svg class="a" style="left:163px;top:745px" width="16" height="15" viewBox="0 0 16 15"><rect x="1" y="1" width="14" height="13" rx="2" fill="#F0C850" stroke="#C89A20"/><circle cx="1.5" cy="1.5" r="1.2" fill="#C89A20"/><circle cx="14.5" cy="1.5" r="1.2" fill="#C89A20"/><circle cx="1.5" cy="13.5" r="1.2" fill="#C89A20"/><circle cx="14.5" cy="13.5" r="1.2" fill="#C89A20"/><text x="8" y="12" text-anchor="middle" font-family="Liberation Sans" font-weight="bold" font-size="11" fill="#705010">R</text></svg>
<svg class="a" style="left:186px;top:744px" width="17" height="17" viewBox="0 0 17 17"><path d="M2 4 L11 1 L15 11 L6 15Z" fill="#1E70D8" stroke="#0A3A90" stroke-width="0.8"/><path d="M4 5 L10 3 L12 10 L6 12Z" fill="#fff"/><path d="M5 10 L10 5" stroke="#1050B0" stroke-width="1.4"/><circle cx="13.5" cy="3.5" r="1.5" fill="#F04020"/></svg>
<svg class="a" style="left:209px;top:745px" width="16" height="16" viewBox="0 0 16 16"><path d="M1 1 L5 4 L3 7Z M15 1 L11 4 L13 7Z" fill="#505048"/><ellipse cx="8" cy="8.5" rx="7" ry="6" fill="#7A786C"/><path d="M1.5 8 Q8 4 14.5 8 Q8 10 1.5 8Z" fill="#202020"/><ellipse cx="4.5" cy="10.5" rx="2.5" ry="2" fill="#E8E8E0"/><ellipse cx="11.5" cy="10.5" rx="2.5" ry="2" fill="#E8E8E0"/><ellipse cx="8" cy="12" rx="3" ry="2.2" fill="#F0F0E8"/><circle cx="8" cy="11.5" r="1" fill="#000"/><circle cx="5" cy="7.8" r="0.9" fill="#fff"/><circle cx="11" cy="7.8" r="0.9" fill="#fff"/><path d="M7 14 Q8 15 9 14" stroke="#D07070" fill="none"/></svg>
<svg class="a" style="left:232px;top:745px" width="16" height="16" viewBox="0 0 16 16"><circle cx="8" cy="8" r="7.5" fill="#1A2E9E"/><circle cx="8" cy="8" r="6.8" fill="#2840C0"/><path d="M1 11.5 Q8 9.5 13.5 1.5 Q11 10 2.5 13.5Z" fill="#D8ECFF"/><path d="M3 9.5 Q9 8 12 3" stroke="#80C0FF" fill="none"/></svg>
<div class="a" style="left:270px;top:742px;width:159px;height:23px;border-radius:3px;background:linear-gradient(#5A9BF8,#3C81F3 20%,#3A7EF0 80%,#2C6BE0);border:1px solid #2B5FD0;"></div>
<svg class="a" style="left:279px;top:745px" width="16" height="16" viewBox="0 0 16 16"><path d="M1 1 L5 4 L3 7Z M15 1 L11 4 L13 7Z" fill="#505048"/><ellipse cx="8" cy="8.5" rx="7" ry="6" fill="#7A786C"/><path d="M1.5 8 Q8 4 14.5 8 Q8 10 1.5 8Z" fill="#202020"/><ellipse cx="4.5" cy="10.5" rx="2.5" ry="2" fill="#E8E8E0"/><ellipse cx="11.5" cy="10.5" rx="2.5" ry="2" fill="#E8E8E0"/><ellipse cx="8" cy="12" rx="3" ry="2.2" fill="#F0F0E8"/><circle cx="8" cy="11.5" r="1" fill="#000"/><circle cx="5" cy="7.8" r="0.9" fill="#fff"/><circle cx="11" cy="7.8" r="0.9" fill="#fff"/><path d="M7 14 Q8 15 9 14" stroke="#D07070" fill="none"/></svg>
<span class="a" style="left:299.00px;top:747.84px;white-space:pre;font-family:'Liberation Sans',sans-serif;font-size:12px;font-weight:normal;font-style:normal;color:#fff;line-height:12px;letter-spacing:0px;transform:scaleX(1.0782);transform-origin:0 0;">(1) AC из корпуса...</span>
<div class="a" style="left:430px;top:742px;width:159px;height:23px;border-radius:3px;background:linear-gradient(#1A4EC0,#1E52C8 20%,#1F55CC 80%,#1C4DBF);border:1px solid #1A3E9A;"></div>
<svg class="a" style="left:440px;top:745px" width="16" height="16" viewBox="0 0 16 16"><rect x="0" y="0" width="16" height="16" fill="#F4FCFF"/><rect x="9" y="0" width="7" height="16" fill="#9FE8F4"/><rect x="10" y="1" width="2" height="2" fill="#10E0F0"/><rect x="13" y="4" width="2" height="2" fill="#10E0F0"/><rect x="11" y="10" width="2" height="2" fill="#10E0F0"/><rect x="13" y="13" width="2" height="1" fill="#10E0F0"/><rect x="2" y="14" width="4" height="2" fill="#30A8E0"/><rect x="15" y="0" width="1" height="16" fill="#404040"/><rect x="12" y="14" width="4" height="2" fill="#505030"/><path d="M12.5 4.2 A5.3 5.3 0 1 0 12.5 12.5" stroke="#FF0000" stroke-width="3" fill="none"/><path d="M8 6.5 L15 6.5 L12.5 10.5 Z" fill="#FF0000"/><rect x="5" y="6" width="3" height="6" fill="#FFFFFF"/></svg>
<span class="a" style="left:460.00px;top:747.84px;white-space:pre;font-family:'Liberation Sans',sans-serif;font-size:12px;font-weight:normal;font-style:normal;color:#fff;line-height:12px;letter-spacing:0px;transform:scaleX(1.0782);transform-origin:0 0;">10ГДВ-2_1.pir - A...</span>
<div class="a" style="left:806px;top:743px;width:17px;height:17px;background:#3C7CE4;"></div>
<span class="a" style="left:808.00px;top:746.84px;white-space:pre;font-family:'Liberation Sans',sans-serif;font-size:12px;font-weight:normal;font-style:normal;color:#fff;line-height:12px;letter-spacing:0px;transform:scaleX(0.7495);transform-origin:0 0;">RU</span>
<svg class="a" style="left:845px;top:745px" width="125" height="17" viewBox="0 0 125 17"><rect x="0" y="0" width="16" height="16" rx="3" fill="#D8D8D8" stroke="#A0A0A0"/><circle cx="8" cy="8" r="4" fill="#202020"/><path d="M2 3 L14 13 M14 3 L2 13 M1 8 H15" stroke="#202020" stroke-width="1.2"/><circle cx="8" cy="8" r="2" fill="#E0E0E0"/><ellipse cx="27" cy="9" rx="8" ry="5" transform="rotate(-40 27 9)" fill="#3A3A3A"/><circle cx="25" cy="11" r="1.3" fill="#E02020"/><circle cx="44" cy="7" r="6" fill="#8890A0"/><circle cx="43" cy="6" r="3" fill="#E0E4EC"/><path d="M42 15 L52 9" stroke="#9AA0E0" stroke-width="1.2"/><rect x="54" y="0" width="16" height="16" fill="#000"/><circle cx="62" cy="8" r="3" fill="#40C0FF"/><circle cx="57" cy="3" r="2" fill="#2090E0"/><circle cx="68" cy="4" r="1.5" fill="#2090E0"/><circle cx="58" cy="13" r="2" fill="#2090E0"/><path d="M57 3 L62 8 L68 4 M62 8 L58 13" stroke="#2090E0"/><path d="M81 1 Q84 4 83 11 H79 Q78 4 81 1Z" fill="#fff" stroke="#000"/><path d="M79 8 L77 12 H79Z M83 8 L85 12 H83Z" fill="#20C0C0" stroke="#000" stroke-width="0.5"/><path d="M80 12 L81 16 L82 12Z" fill="#F03000"/><rect x="90" y="0" width="16" height="16" fill="#000080"/><rect x="108" y="3" width="16" height="11" fill="#76B900"/><path d="M110 9 Q115 3 122 8 Q116 12 111 9" stroke="#D8F0A0" fill="none"/></svg>
<span class="a" style="left:935.50px;top:747.34px;white-space:pre;font-family:'Liberation Sans',sans-serif;font-size:12px;font-weight:normal;font-style:normal;color:#fff;line-height:12px;letter-spacing:0px;transform:scaleX(0.9124);transform-origin:0 0;">Ru</span>
<span class="a" style="left:976.50px;top:747.34px;white-space:pre;font-family:'Liberation Sans',sans-serif;font-size:12px;font-weight:normal;font-style:normal;color:#fff;line-height:12px;letter-spacing:0px;transform:scaleX(1.0989);transform-origin:0 0;">12:50</span>
<div class="a" style="left:264px;top:162px;width:497px;height:414px;border-radius:7px 7px 0 0;background:linear-gradient(#0A5AE8 0px,#2F80FA 2px,#1468F4 4px,#0058E8 9px,#0055E5 20px,#0A66F6 24px,#0A68F8 28px,#0050E0 30px,#0040D0 32px,#0040D0 33px);"></div>
<div class="a" style="left:264px;top:168px;width:1px;height:408px;background:#0226D8;"></div>
<div class="a" style="left:265px;top:192px;width:1px;height:384px;background:#1A6CF2;"></div>
<div class="a" style="left:266px;top:192px;width:1px;height:384px;background:#0A4CE0;"></div>
<div class="a" style="left:758px;top:192px;width:1px;height:384px;background:#1464F4;"></div>
<div class="a" style="left:759px;top:168px;width:1px;height:408px;background:#0838C8;"></div>
<div class="a" style="left:760px;top:168px;width:1px;height:408px;background:#00128F;"></div>
<div class="a" style="left:265px;top:573px;width:494px;height:1px;background:#1464F4;"></div>
<div class="a" style="left:265px;top:574px;width:495px;height:1px;background:#0838C8;"></div>
<div class="a" style="left:264px;top:575px;width:497px;height:1px;background:#00128F;"></div>
<div class="a" style="left:267px;top:195px;width:491px;height:378px;background:#ECE9D8;"></div>
<span class="a" style="left:271.00px;top:170.37px;white-space:pre;font-family:'Liberation Sans',sans-serif;font-size:20px;font-weight:bold;font-style:normal;color:#fff;line-height:20px;letter-spacing:0px;transform:scaleX(0.8865);transform-origin:0 0;text-shadow:1px 1px 0 #0A1E78;">Impulse</span>
<span class="a" style="left:344.00px;top:170.37px;white-space:pre;font-family:'Liberation Sans',sans-serif;font-size:20px;font-weight:bold;font-style:normal;color:#fff;line-height:20px;letter-spacing:0px;transform:scaleX(0.8883);transform-origin:0 0;text-shadow:1px 1px 0 #0A1E78;">response</span>
<span class="a" style="left:429.00px;top:170.37px;white-space:pre;font-family:'Liberation Sans',sans-serif;font-size:20px;font-weight:bold;font-style:normal;color:#fff;line-height:20px;letter-spacing:0px;transform:scaleX(0.9380);transform-origin:0 0;text-shadow:1px 1px 0 #0A1E78;">measurement</span>
<span class="a" style="left:569.00px;top:170.37px;white-space:pre;font-family:'Liberation Sans',sans-serif;font-size:20px;font-weight:bold;font-style:normal;color:#fff;line-height:20px;letter-spacing:0px;transform:scaleX(0.8831);transform-origin:0 0;text-shadow:1px 1px 0 #0A1E78;">Signal</span>
<span class="a" style="left:629.00px;top:170.37px;white-space:pre;font-family:'Liberation Sans',sans-serif;font-size:20px;font-weight:bold;font-style:normal;color:#fff;line-height:20px;letter-spacing:0px;transform:scaleX(0.9431);transform-origin:0 0;text-shadow:1px 1px 0 #0A1E78;">recording</span>
<svg class="a" style="left:555px;top:170px" width="14" height="20" viewBox="0 0 14 20"><path d="M4 16.5 L10 3.5" stroke="#0A1E78" stroke-width="2.6" transform="translate(1,1)"/><path d="M4 16.5 L10 3.5" stroke="#fff" stroke-width="2.6"/></svg>
<div class="a" style="left:731px;top:167px;width:25px;height:25px;border:1px solid #fff;border-radius:3px;background:linear-gradient(135deg,#F09C80 0%,#E2623E 35%,#D5461A 70%,#C13A10 100%);"></div>
<svg class="a" style="left:731px;top:167px" width="25" height="25" viewBox="0 0 25 25"><path d="M7 7 L18 18 M18 7 L7 18" stroke="#fff" stroke-width="3" stroke-linecap="square"/></svg>
<div class="a" style="left:273px;top:222px;width:477px;height:313px;border:1px solid #919B9C;background:linear-gradient(#FCFCFE,#F4F3EE);"></div>
<div class="a" style="left:273px;top:202px;width:82px;height:22px;border:1px solid #919B9C;border-bottom:none;border-radius:3px 3px 0 0;background:#FCFCFE;"></div>
<div class="a" style="left:273px;top:202px;width:82px;height:3px;background:#FFC83C;border-radius:3px 3px 0 0;border-top:1px solid #E68B2C;"></div>
<span class="a" style="left:280.50px;top:206.69px;white-space:pre;font-family:'Liberation Sans',sans-serif;font-size:11px;font-weight:normal;font-style:normal;color:#000;line-height:11px;letter-spacing:0px;transform:scaleX(0.9306);transform-origin:0 0;">Periodic Noise</span>
<div class="a" style="left:355px;top:205px;width:41px;height:18px;border:1px solid #919B9C;border-bottom:none;border-radius:3px 3px 0 0;background:linear-gradient(#FFFFFF,#F0F0EA 80%,#E4E3DC);"></div>
<span class="a" style="left:358.50px;top:209.19px;white-space:pre;font-family:'Liberation Sans',sans-serif;font-size:11px;font-weight:normal;font-style:normal;color:#000;line-height:11px;letter-spacing:0px;transform:scaleX(0.9215);transform-origin:0 0;">Sweep</span>
<div class="a" style="left:397px;top:205px;width:41px;height:18px;border:1px solid #919B9C;border-bottom:none;border-radius:3px 3px 0 0;background:linear-gradient(#FFFFFF,#F0F0EA 80%,#E4E3DC);"></div>
<span class="a" style="left:402.00px;top:209.19px;white-space:pre;font-family:'Liberation Sans',sans-serif;font-size:11px;font-weight:normal;font-style:normal;color:#000;line-height:11px;letter-spacing:0px;transform:scaleX(0.8398);transform-origin:0 0;">MLS</span>
<div class="a" style="left:439px;top:205px;width:99px;height:18px;border:1px solid #919B9C;border-bottom:none;border-radius:3px 3px 0 0;background:linear-gradient(#FFFFFF,#F0F0EA 80%,#E4E3DC);"></div>
<span class="a" style="left:444.00px;top:209.19px;white-space:pre;font-family:'Liberation Sans',sans-serif;font-size:11px;font-weight:normal;font-style:normal;color:#000;line-height:11px;letter-spacing:0px;transform:scaleX(1.0123);transform-origin:0 0;">External excitation</span>
<div class="a" style="left:288px;top:241px;width:200px;height:218px;border:1px solid #D0D0BF;border-radius:4px;"></div>
<div class="a" style="left:293.5px;top:239px;width:121.0px;height:6px;background:#F8F8F5;"></div>
<span class="a" style="left:295.50px;top:236.99px;white-space:pre;font-family:'Liberation Sans',sans-serif;font-size:11px;font-weight:normal;font-style:normal;color:#0046D5;line-height:11px;letter-spacing:0px;transform:scaleX(0.9727);transform-origin:0 0;">Periodic noise generator</span>
<span class="a" style="left:309.50px;top:261.69px;white-space:pre;font-family:'Liberation Sans',sans-serif;font-size:11px;font-weight:normal;font-style:normal;color:#000;line-height:11px;letter-spacing:0px;transform:scaleX(0.9688);transform-origin:0 0;">Sequence length</span>
<div class="a" style="left:405px;top:257px;width:62px;height:21px;border:1px solid #7F9DB9;background:#fff;"></div>
<div class="a" style="left:448px;top:259px;width:17px;height:17px;border-radius:2px;background:linear-gradient(135deg,#D2DEFD 0%,#C0D2FB 45%,#B2C8F8 100%);border:1px solid #C8D6FA;"></div>
<svg class="a" style="left:452.0px;top:264.5px" width="9" height="6" viewBox="0 0 9 6"><path d="M0.8 1 L4.5 4.6 L8.2 1" stroke="#4D6185" stroke-width="2.2" fill="none"/></svg>
<div class="a" style="left:408px;top:260px;width:37px;height:15px;background:#316AC5;"></div>
<span class="a" style="left:409.00px;top:262.69px;white-space:pre;font-family:'Liberation Sans',sans-serif;font-size:11px;font-weight:normal;font-style:normal;color:#fff;line-height:11px;letter-spacing:0px;">32k</span>
<span class="a" style="left:309.50px;top:291.69px;white-space:pre;font-family:'Liberation Sans',sans-serif;font-size:11px;font-weight:normal;font-style:normal;color:#000;line-height:11px;letter-spacing:0px;transform:scaleX(0.9596);transform-origin:0 0;">Sampling rate (Hz)</span>
<div class="a" style="left:405px;top:286px;width:62px;height:21px;border:1px solid #7F9DB9;background:#fff;"></div>
<div class="a" style="left:448px;top:288px;width:17px;height:17px;border-radius:2px;background:linear-gradient(135deg,#D2DEFD 0%,#C0D2FB 45%,#B2C8F8 100%);border:1px solid #C8D6FA;"></div>
<svg class="a" style="left:452.0px;top:293.5px" width="9" height="6" viewBox="0 0 9 6"><path d="M0.8 1 L4.5 4.6 L8.2 1" stroke="#4D6185" stroke-width="2.2" fill="none"/></svg>
<span class="a" style="left:409.00px;top:291.69px;white-space:pre;font-family:'Liberation Sans',sans-serif;font-size:11px;font-weight:normal;font-style:normal;color:#000;line-height:11px;letter-spacing:0px;">96000</span>
<span class="a" style="left:309.50px;top:317.49px;white-space:pre;font-family:'Liberation Sans',sans-serif;font-size:11px;font-weight:normal;font-style:normal;color:#000;line-height:11px;letter-spacing:0px;transform:scaleX(0.9898);transform-origin:0 0;">Time constant:</span>
<span class="a" style="left:405.50px;top:317.49px;white-space:pre;font-family:'Liberation Sans',sans-serif;font-size:11px;font-weight:normal;font-style:normal;color:#000;line-height:11px;letter-spacing:0px;transform:scaleX(0.9732);transform-origin:0 0;">341.33 ms</span>
<span class="a" style="left:309.50px;top:343.49px;white-space:pre;font-family:'Liberation Sans',sans-serif;font-size:11px;font-weight:normal;font-style:normal;color:#000;line-height:11px;letter-spacing:0px;transform:scaleX(0.9559);transform-origin:0 0;">Spectrum</span>
<div class="a" style="left:370px;top:338px;width:97px;height:21px;border:1px solid #7F9DB9;background:#fff;"></div>
<div class="a" style="left:448px;top:340px;width:17px;height:17px;border-radius:2px;background:linear-gradient(135deg,#D2DEFD 0%,#C0D2FB 45%,#B2C8F8 100%);border:1px solid #C8D6FA;"></div>
<svg class="a" style="left:452.0px;top:345.5px" width="9" height="6" viewBox="0 0 9 6"><path d="M0.8 1 L4.5 4.6 L8.2 1" stroke="#4D6185" stroke-width="2.2" fill="none"/></svg>
<span class="a" style="left:374.00px;top:343.69px;white-space:pre;font-family:'Liberation Sans',sans-serif;font-size:11px;font-weight:normal;font-style:normal;color:#000;line-height:11px;letter-spacing:0px;transform:scaleX(0.9057);transform-origin:0 0;">Pink PN</span>
<span class="a" style="left:309.50px;top:372.39px;white-space:pre;font-family:'Liberation Sans',sans-serif;font-size:11px;font-weight:normal;font-style:normal;color:#000;line-height:11px;letter-spacing:0px;transform:scaleX(0.9924);transform-origin:0 0;">Output volume</span>
<div class="a" style="left:417px;top:367px;width:50px;height:21px;border:1px solid #7F9DB9;background:#fff;"></div>
<div class="a" style="left:448px;top:369px;width:17px;height:17px;border-radius:2px;background:linear-gradient(135deg,#D2DEFD 0%,#C0D2FB 45%,#B2C8F8 100%);border:1px solid #C8D6FA;"></div>
<svg class="a" style="left:452.0px;top:374.5px" width="9" height="6" viewBox="0 0 9 6"><path d="M0.8 1 L4.5 4.6 L8.2 1" stroke="#4D6185" stroke-width="2.2" fill="none"/></svg>
<span class="a" style="left:421.00px;top:372.69px;white-space:pre;font-family:'Liberation Sans',sans-serif;font-size:11px;font-weight:normal;font-style:normal;color:#000;line-height:11px;letter-spacing:0px;">-3</span>
<span class="a" style="left:309.50px;top:402.09px;white-space:pre;font-family:'Liberation Sans',sans-serif;font-size:11px;font-weight:normal;font-style:normal;color:#000;line-height:11px;letter-spacing:0px;transform:scaleX(0.9867);transform-origin:0 0;">Pink cutoff (Hz)</span>
<div class="a" style="left:417px;top:398px;width:48px;height:20px;border:1px solid #7F9DB9;background:#fff;"></div>
<span class="a" style="left:446.25px;top:402.69px;white-space:pre;font-family:'Liberation Sans',sans-serif;font-size:11px;font-weight:normal;font-style:normal;color:#000;line-height:11px;letter-spacing:0px;">50</span>
<div class="a" style="left:326px;top:428px;width:109px;height:21px;border:1px solid #003C74;border-radius:3px;background:linear-gradient(#FFFFFF 0%,#F7F7F4 40%,#ECEBE6 80%,#D6D0C5 100%);"></div>
<div class="a" style="left:327px;top:429px;width:107px;height:19px;border:2px solid #A9C4F0;border-top-color:#CEE7FF;border-bottom-color:#7A9BEA;border-left-color:#BCD4F6;border-right-color:#98B4EC;border-radius:2px;"></div>
<span class="a" style="left:358.00px;top:433.69px;white-space:pre;font-family:'Liberation Sans',sans-serif;font-size:11px;font-weight:normal;font-style:normal;color:#000;line-height:11px;letter-spacing:0px;transform:scaleX(0.9809);transform-origin:0 0;">Generate</span>
<div class="a" style="left:505px;top:241px;width:224px;height:218px;border:1px solid #D0D0BF;border-radius:4px;"></div>
<div class="a" style="left:510.5px;top:239px;width:50.0px;height:6px;background:#F8F8F5;"></div>
<span class="a" style="left:512.50px;top:236.99px;white-space:pre;font-family:'Liberation Sans',sans-serif;font-size:11px;font-weight:normal;font-style:normal;color:#0046D5;line-height:11px;letter-spacing:0px;transform:scaleX(0.9945);transform-origin:0 0;">Recorder</span>
<span class="a" style="left:516.50px;top:261.79px;white-space:pre;font-family:'Liberation Sans',sans-serif;font-size:11px;font-weight:normal;font-style:normal;color:#000;line-height:11px;letter-spacing:0px;transform:scaleX(0.9881);transform-origin:0 0;">Preferred input channel</span>
<div class="a" style="left:643px;top:257px;width:63px;height:21px;border:1px solid #7F9DB9;background:#fff;"></div>
<div class="a" style="left:687px;top:259px;width:17px;height:17px;border-radius:2px;background:linear-gradient(135deg,#D2DEFD 0%,#C0D2FB 45%,#B2C8F8 100%);border:1px solid #C8D6FA;"></div>
<svg class="a" style="left:691.0px;top:264.5px" width="9" height="6" viewBox="0 0 9 6"><path d="M0.8 1 L4.5 4.6 L8.2 1" stroke="#4D6185" stroke-width="2.2" fill="none"/></svg>
<span class="a" style="left:647.00px;top:262.69px;white-space:pre;font-family:'Liberation Sans',sans-serif;font-size:11px;font-weight:normal;font-style:normal;color:#000;line-height:11px;letter-spacing:0px;">Left</span>
<span class="a" style="left:524.50px;top:290.29px;white-space:pre;font-family:'Liberation Sans',sans-serif;font-size:11px;font-weight:normal;font-style:normal;color:#000;line-height:11px;letter-spacing:0px;transform:scaleX(0.9510);transform-origin:0 0;">Dual channel measurement mode</span>
<div class="a" style="left:694px;top:288px;width:13px;height:13px;border:1px solid #1C5180;background:linear-gradient(135deg,#DCDCD7 0%,#F4F4F0 60%,#FFFFFF 100%);"></div>
<span class="a" style="left:543.00px;top:316.29px;white-space:pre;font-family:'Liberation Sans',sans-serif;font-size:11px;font-weight:normal;font-style:normal;color:#000;line-height:11px;letter-spacing:0px;transform:scaleX(0.9896);transform-origin:0 0;">Invert Phase of input channel</span>
<div class="a" style="left:694px;top:314px;width:13px;height:13px;border:1px solid #1C5180;background:linear-gradient(135deg,#DCDCD7 0%,#F4F4F0 60%,#FFFFFF 100%);"></div>
<span class="a" style="left:524.50px;top:346.09px;white-space:pre;font-family:'Liberation Sans',sans-serif;font-size:11px;font-weight:normal;font-style:normal;color:#000;line-height:11px;letter-spacing:0px;transform:scaleX(0.9832);transform-origin:0 0;">Number of averages</span>
<div class="a" style="left:640px;top:339px;width:66px;height:23px;border:1px solid #7F9DB9;background:#fff;"></div>
<span class="a" style="left:647.00px;top:340.69px;white-space:pre;font-family:'Liberation Sans',sans-serif;font-size:11px;font-weight:normal;font-style:normal;color:#000;line-height:11px;letter-spacing:0px;">3</span>
<span class="a" style="left:522.50px;top:376.79px;white-space:pre;font-family:'Liberation Sans',sans-serif;font-size:11px;font-weight:normal;font-style:normal;color:#ACA899;line-height:11px;letter-spacing:0px;transform:scaleX(0.9715);transform-origin:0 0;">Frequency domain 2Ch averaging</span>
<div class="a" style="left:693px;top:375px;width:13px;height:13px;border:1px solid #CAC8BB;background:#fff;"></div>
<span class="a" style="left:512.00px;top:402.59px;white-space:pre;font-family:'Liberation Sans',sans-serif;font-size:11px;font-weight:normal;font-style:normal;color:#000;line-height:11px;letter-spacing:0px;transform:scaleX(0.9601);transform-origin:0 0;">Filter dual channel impulse response</span>
<div class="a" style="left:694px;top:401px;width:13px;height:13px;border:1px solid #1C5180;background:linear-gradient(135deg,#DCDCD7 0%,#F4F4F0 60%,#FFFFFF 100%);"></div>
<div class="a" style="left:560px;top:428px;width:109px;height:21px;border:1px solid #003C74;border-radius:3px;background:linear-gradient(#FFFFFF 0%,#F7F7F4 40%,#ECEBE6 80%,#D6D0C5 100%);"></div>
<div class="a" style="left:561px;top:429px;width:107px;height:19px;border:2px solid #A9C4F0;border-top-color:#CEE7FF;border-bottom-color:#7A9BEA;border-left-color:#BCD4F6;border-right-color:#98B4EC;border-radius:2px;"></div>
<span class="a" style="left:596.00px;top:433.69px;white-space:pre;font-family:'Liberation Sans',sans-serif;font-size:11px;font-weight:normal;font-style:normal;color:#000;line-height:11px;letter-spacing:0px;transform:scaleX(1.0432);transform-origin:0 0;">Record</span>
<span class="a" style="left:589.50px;top:468.69px;white-space:pre;font-family:'Liberation Sans',sans-serif;font-size:11px;font-weight:normal;font-style:normal;color:#000;line-height:11px;letter-spacing:0px;transform:scaleX(0.9891);transform-origin:0 0;">Close after recording</span>
<div class="a" style="left:694px;top:467px;width:13px;height:13px;border:1px solid #1C5180;background:linear-gradient(135deg,#DCDCD7 0%,#F4F4F0 60%,#FFFFFF 100%);"></div>
<svg class="a" style="left:696px;top:469px" width="9" height="9" viewBox="0 0 9 9"><path d="M1 4 L3.5 6.5 L8 1.5" stroke="#21A121" stroke-width="2" fill="none"/></svg>
<div class="a" style="left:288px;top:491px;width:323px;height:28px;background:#C0C0C0;border-top:1px solid #D8D4C4;border-left:1px solid #B8B4A4;"></div>
<div class="a" style="left:289px;top:505px;width:322px;height:1px;background:#000;"></div>
<div class="a" style="left:324px;top:496px;width:1px;height:7px;background:#000;"></div>
<span class="a" style="left:355.50px;top:494.88px;white-space:pre;font-family:'Liberation Sans',sans-serif;font-size:9px;font-weight:normal;font-style:normal;color:#000;line-height:9px;letter-spacing:0px;transform:scaleX(0.9220);transform-origin:0 0;">-70</span>
<div class="a" style="left:396px;top:496px;width:1px;height:7px;background:#000;"></div>
<span class="a" style="left:426.50px;top:494.88px;white-space:pre;font-family:'Liberation Sans',sans-serif;font-size:9px;font-weight:normal;font-style:normal;color:#000;line-height:9px;letter-spacing:0px;transform:scaleX(0.9220);transform-origin:0 0;">-50</span>
<div class="a" style="left:467px;top:496px;width:1px;height:7px;background:#000;"></div>
<span class="a" style="left:497.50px;top:494.88px;white-space:pre;font-family:'Liberation Sans',sans-serif;font-size:9px;font-weight:normal;font-style:normal;color:#000;line-height:9px;letter-spacing:0px;transform:scaleX(0.9220);transform-origin:0 0;">-30</span>
<div class="a" style="left:538px;top:496px;width:1px;height:7px;background:#000;"></div>
<span class="a" style="left:569.50px;top:494.88px;white-space:pre;font-family:'Liberation Sans',sans-serif;font-size:9px;font-weight:normal;font-style:normal;color:#000;line-height:9px;letter-spacing:0px;transform:scaleX(0.9220);transform-origin:0 0;">-10</span>
<span class="a" style="left:320.00px;top:507.88px;white-space:pre;font-family:'Liberation Sans',sans-serif;font-size:9px;font-weight:normal;font-style:normal;color:#000;line-height:9px;letter-spacing:0px;transform:scaleX(0.9220);transform-origin:0 0;">-80</span>
<div class="a" style="left:360px;top:509px;width:1px;height:7px;background:#000;"></div>
<span class="a" style="left:390.50px;top:507.88px;white-space:pre;font-family:'Liberation Sans',sans-serif;font-size:9px;font-weight:normal;font-style:normal;color:#000;line-height:9px;letter-spacing:0px;transform:scaleX(0.9220);transform-origin:0 0;">-60</span>
<div class="a" style="left:431px;top:509px;width:1px;height:7px;background:#000;"></div>
<span class="a" style="left:461.50px;top:507.88px;white-space:pre;font-family:'Liberation Sans',sans-serif;font-size:9px;font-weight:normal;font-style:normal;color:#000;line-height:9px;letter-spacing:0px;transform:scaleX(0.9220);transform-origin:0 0;">-40</span>
<div class="a" style="left:502px;top:509px;width:1px;height:7px;background:#000;"></div>
<span class="a" style="left:533.50px;top:507.88px;white-space:pre;font-family:'Liberation Sans',sans-serif;font-size:9px;font-weight:normal;font-style:normal;color:#000;line-height:9px;letter-spacing:0px;transform:scaleX(0.9220);transform-origin:0 0;">-20</span>
<div class="a" style="left:574px;top:509px;width:1px;height:7px;background:#000;"></div>
<span class="a" style="left:289.50px;top:494.88px;white-space:pre;font-family:'Liberation Sans',sans-serif;font-size:9px;font-weight:normal;font-style:normal;color:#000;line-height:9px;letter-spacing:0px;transform:scaleX(0.8972);transform-origin:0 0;">L</span>
<span class="a" style="left:289.50px;top:507.88px;white-space:pre;font-family:'Liberation Sans',sans-serif;font-size:9px;font-weight:normal;font-style:normal;color:#000;line-height:9px;letter-spacing:0px;transform:scaleX(0.8462);transform-origin:0 0;">R</span>
<span class="a" style="left:598.00px;top:494.88px;white-space:pre;font-family:'Liberation Sans',sans-serif;font-size:9px;font-weight:normal;font-style:normal;color:#000;line-height:9px;letter-spacing:0px;transform:scaleX(0.8170);transform-origin:0 0;">dB</span>
<span class="a" style="left:598.00px;top:507.88px;white-space:pre;font-family:'Liberation Sans',sans-serif;font-size:9px;font-weight:normal;font-style:normal;color:#000;line-height:9px;letter-spacing:0px;transform:scaleX(0.8170);transform-origin:0 0;">dB</span>
<div class="a" style="left:649px;top:498px;width:73px;height:21px;border:1px solid #003C74;border-radius:3px;background:linear-gradient(#FFFFFF 0%,#F7F7F4 40%,#ECEBE6 80%,#D6D0C5 100%);"></div>
<span class="a" style="left:667.50px;top:503.69px;white-space:pre;font-family:'Liberation Sans',sans-serif;font-size:11px;font-weight:normal;font-style:normal;color:#000;line-height:11px;letter-spacing:0px;transform:scaleX(1.0327);transform-origin:0 0;">Default</span>
<div class="a" style="left:597px;top:544px;width:73px;height:21px;border:1px solid #003C74;border-radius:3px;background:linear-gradient(#FFFFFF 0%,#F7F7F4 40%,#ECEBE6 80%,#D6D0C5 100%);"></div>
<div class="a" style="left:598px;top:545px;width:71px;height:19px;border:2px solid #A9C4F0;border-top-color:#CEE7FF;border-bottom-color:#7A9BEA;border-left-color:#BCD4F6;border-right-color:#98B4EC;border-radius:2px;"></div>
<span class="a" style="left:626.50px;top:549.69px;white-space:pre;font-family:'Liberation Sans',sans-serif;font-size:11px;font-weight:normal;font-style:normal;color:#000;line-height:11px;letter-spacing:0px;transform:scaleX(0.8802);transform-origin:0 0;">OK</span>
<div class="a" style="left:678px;top:544px;width:73px;height:21px;border:1px solid #003C74;border-radius:3px;background:linear-gradient(#FFFFFF 0%,#F7F7F4 40%,#ECEBE6 80%,#D6D0C5 100%);"></div>
<span class="a" style="left:695.00px;top:549.69px;white-space:pre;font-family:'Liberation Sans',sans-serif;font-size:11px;font-weight:normal;font-style:normal;color:#000;line-height:11px;letter-spacing:0px;transform:scaleX(0.9881);transform-origin:0 0;">Отмена</span>
</body></html>
